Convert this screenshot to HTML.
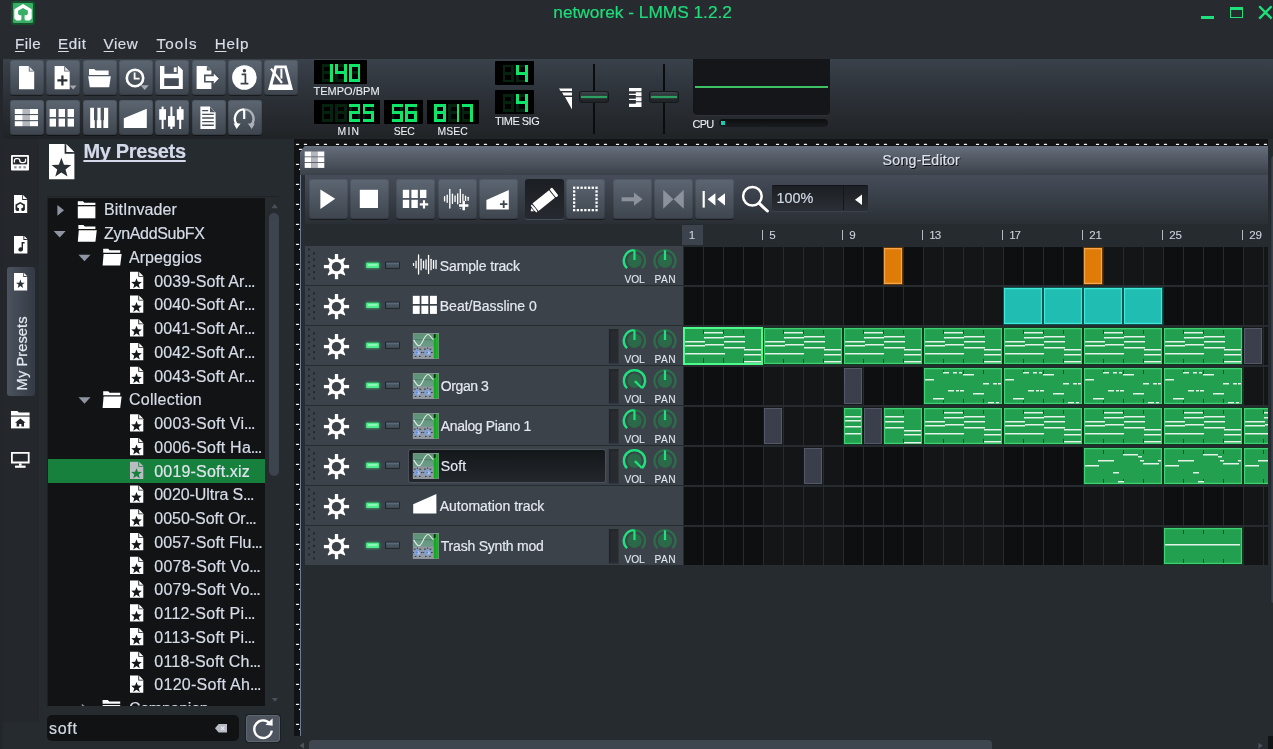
<!DOCTYPE html>
<html lang="en"><head><meta charset="utf-8"><title>networek - LMMS 1.2.2</title>
<style>
html,body{margin:0;padding:0}
body{width:1273px;height:749px;overflow:hidden;background:#262b30;position:relative;font-family:"Liberation Sans",sans-serif}
div{position:absolute;box-sizing:border-box}
.t{white-space:nowrap;line-height:1;-webkit-text-stroke:.2px currentColor}
u{text-decoration:underline;text-decoration-skip-ink:none;text-decoration-thickness:1.4px;text-underline-offset:1.6px}
.tb{border-radius:3px;background:linear-gradient(#5c6672,#3e454e);box-shadow:0 1px 0 rgba(0,0,0,.45),inset 0 0 0 1px rgba(0,0,0,.12)}
svg{overflow:visible}
</style></head>
<body>
<div id="root" style="left:0;top:0;width:1273px;height:749px;overflow:hidden;will-change:transform">
<div style="left:0.00px;top:0.00px;width:1273.00px;height:58.50px;background:#272b2f"></div>
<div style="left:11.00px;top:1.00px;width:24.20px;height:24.00px;background:#14502c;border-radius:3px;filter:blur(.6px)"></div>
<div style="left:12.80px;top:3.00px;width:20.50px;height:20.00px;background:#39ae66;border-radius:1px"></div>
<svg style="position:absolute;left:0.00px;top:0.00px;" width="46" height="26" viewBox="0 0 46 26"><path d="M23 4.1 L31.7 9.3 V18.6 L29.6 20.5 H25.6 L24.4 19.2 V15 H21.6 V19.2 L20.4 20.5 H16.4 L14.3 18.6 V9.3 Z" fill="#fff"/><path d="M23 7.9 L27.9 10.7 V14 L26.6 15.3 H19.4 L18.1 14 V10.7 Z" fill="#39ae66"/><rect x="21.7" y="14.6" width="2.6" height="7" fill="#39ae66"/></svg>
<div class="t" style="left:553.30px;top:4.00px;font-size:17.3px;color:#1fdc7b;;letter-spacing:0.0px">networek - LMMS 1.2.2</div>
<div style="left:1201.00px;top:16.00px;width:13.20px;height:3.00px;background:#1fe07c"></div>
<div style="left:1229.80px;top:6.80px;width:13.50px;height:11.40px;border:1.2px solid #1fe07c;border-top-width:3px"></div>
<svg style="position:absolute;left:1258.00px;top:5.10px;" width="15" height="15" viewBox="0 0 15 15"><path d="M1.2 1.2 L13.6 13.6 M13.6 1.2 L1.2 13.6" stroke="#1fe07c" stroke-width="2.3" fill="none"/></svg>
<div class="t" style="left:14.90px;top:36.00px;font-size:15.2px;color:#d8dde8;;letter-spacing:0.467px"><u>F</u>ile</div>
<div class="t" style="left:58.00px;top:36.00px;font-size:15.2px;color:#d8dde8;;letter-spacing:0.633px"><u>E</u>dit</div>
<div class="t" style="left:103.60px;top:36.00px;font-size:15.2px;color:#d8dde8;;letter-spacing:0.467px"><u>V</u>iew</div>
<div class="t" style="left:156.40px;top:36.00px;font-size:15.2px;color:#d8dde8;;letter-spacing:1.2px"><u>T</u>ools</div>
<div class="t" style="left:214.70px;top:36.00px;font-size:15.2px;color:#d8dde8;;letter-spacing:0.8px"><u>H</u>elp</div>
<div style="left:3.00px;top:58.50px;width:1270.00px;height:80.50px;background:linear-gradient(#39414a,#2b3036 50%,#202326)"></div>
<div style="left:0.00px;top:58.50px;width:3.00px;height:700.00px;background:#23272b"></div>
<div class="tb" style="left:10.00px;top:60.00px;width:34.00px;height:35.00px;"></div>
<div class="tb" style="left:46.40px;top:60.00px;width:34.00px;height:35.00px;"></div>
<div class="tb" style="left:82.70px;top:60.00px;width:34.00px;height:35.00px;"></div>
<div class="tb" style="left:119.00px;top:60.00px;width:34.00px;height:35.00px;"></div>
<div class="tb" style="left:155.20px;top:60.00px;width:34.00px;height:35.00px;"></div>
<div class="tb" style="left:191.50px;top:60.00px;width:34.00px;height:35.00px;"></div>
<div class="tb" style="left:227.80px;top:60.00px;width:34.00px;height:35.00px;"></div>
<div class="tb" style="left:264.00px;top:60.00px;width:34.00px;height:35.00px;"></div>
<div class="tb" style="left:10.00px;top:100.00px;width:34.00px;height:35.00px;"></div>
<div class="tb" style="left:46.40px;top:100.00px;width:34.00px;height:35.00px;"></div>
<div class="tb" style="left:82.70px;top:100.00px;width:34.00px;height:35.00px;"></div>
<div class="tb" style="left:119.00px;top:100.00px;width:34.00px;height:35.00px;"></div>
<div class="tb" style="left:155.20px;top:100.00px;width:34.00px;height:35.00px;"></div>
<div class="tb" style="left:191.50px;top:100.00px;width:34.00px;height:35.00px;"></div>
<div class="tb" style="left:227.80px;top:100.00px;width:34.00px;height:35.00px;"></div>
<svg style="position:absolute;left:10.00px;top:60.00px;" width="34" height="35" viewBox="0 0 34 35"><path d="M9 6 H18.5 L24.2 11.7 V29.2 H9 Z" fill="#fff"/><path d="M18.8 6.3 V11.4 H23.9 Z" fill="#4f5863"/><path d="M19.6 6.9 L23.4 10.7 H19.6 Z" fill="#fff" opacity=".85"/></svg>
<svg style="position:absolute;left:46.40px;top:60.00px;" width="34" height="35" viewBox="0 0 34 35"><path d="M8.6 6 H18 L23.7 11.7 V29.2 H8.6 Z" fill="#fff"/><path d="M18.3 6.3 V11.4 H23.4 Z" fill="#4f5863"/><path d="M19.1 6.9 L22.9 10.7 H19.1 Z" fill="#fff" opacity=".85"/><path d="M11.4 20.4 h10 M16.4 15.4 v10" stroke="#2b3036" stroke-width="2.2"/><path d="M23.6 25.4 h7 l-3.5 4.2z" fill="#a4a9b1"/></svg>
<svg style="position:absolute;left:82.70px;top:60.00px;" width="34" height="35" viewBox="0 0 34 35"><path d="M6 9 h5.2 l1.6 1.6 H25.6 V15 H6 Z" fill="#fff"/><path d="M5.2 16.3 H27.8 L26.2 27.2 H6.8 Z" fill="#fff"/></svg>
<svg style="position:absolute;left:119.00px;top:60.00px;" width="34" height="35" viewBox="0 0 34 35"><circle cx="16" cy="18" r="8.2" fill="none" stroke="#fff" stroke-width="2.6"/><path d="M15.6 12.6 V18.6 H20.6" stroke="#fff" stroke-width="1.8" fill="none"/><path d="M21.6 25.2 h8.2 l-4.1 4.8z" fill="#a4a9b1"/></svg>
<svg style="position:absolute;left:155.20px;top:60.00px;" width="34" height="35" viewBox="0 0 34 35"><path d="M5 6 H23.6 L27.8 10.2 V29 H5 Z" fill="#fff"/><rect x="9.4" y="6" width="13.4" height="7.8" fill="#4f5863"/><rect x="18.8" y="7.4" width="2.8" height="4.6" fill="#fff"/><rect x="9.2" y="18.2" width="14.6" height="7.8" fill="#454c56"/></svg>
<svg style="position:absolute;left:191.50px;top:60.00px;" width="34" height="35" viewBox="0 0 34 35"><path d="M4.6 6 H14.6 L19.4 10.8 V29 H4.6 Z" fill="#fff"/><path d="M14.8 6.4 V10.6 H19 Z" fill="#4f5863"/><path d="M12.8 15.4 H21 V11.6 L28 18.6 L21 25.6 V21.8 H12.8 Z" fill="#fff" stroke="#4a525c" stroke-width="1.6"/></svg>
<svg style="position:absolute;left:227.80px;top:60.00px;" width="34" height="35" viewBox="0 0 34 35"><circle cx="16.4" cy="17.5" r="12.3" fill="#fff"/><circle cx="16.4" cy="10.8" r="1.7" fill="#3a4048"/><path d="M13.6 14.4 H17.4 V23 M12.6 23.6 H20.4" stroke="#3a4048" stroke-width="1.7" fill="none"/></svg>
<svg style="position:absolute;left:264.00px;top:60.00px;" width="34" height="35" viewBox="0 0 34 35"><path d="M10.6 5.4 H22.6 L29 30 H4 Z M12.8 8.2 L8.6 24.4 H24.6 L20.4 8.2 Z" fill="#fff" fill-rule="evenodd"/><path d="M7 8.6 L18 23" stroke="#fff" stroke-width="2.2"/><rect x="16.4" y="8.6" width="2" height="10" fill="#fff"/></svg>
<svg style="position:absolute;left:10.00px;top:100.00px;" width="34" height="35" viewBox="0 0 34 35"><rect x="4.8" y="9.00" width="8.00" height="5.00" fill="#fff"/><rect x="12.80" y="9.00" width="7.20" height="5.00" fill="#b4b8be"/><rect x="20.00" y="9.00" width="8.00" height="5.00" fill="#fff"/><rect x="4.8" y="15.10" width="8.00" height="5.00" fill="#fff"/><rect x="12.80" y="15.10" width="7.20" height="5.00" fill="#b4b8be"/><rect x="20.00" y="15.10" width="8.00" height="5.00" fill="#fff"/><rect x="4.8" y="21.20" width="8.00" height="5.00" fill="#fff"/><rect x="12.80" y="21.20" width="7.20" height="5.00" fill="#b4b8be"/><rect x="20.00" y="21.20" width="8.00" height="5.00" fill="#fff"/></svg>
<svg style="position:absolute;left:46.40px;top:100.00px;" width="34" height="35" viewBox="0 0 34 35"><rect x="3.60" y="9.00" width="6.4" height="8" fill="#fff"/><rect x="12.60" y="9.00" width="6.4" height="8" fill="#fff"/><rect x="21.60" y="9.00" width="6.4" height="8" fill="#fff"/><rect x="3.60" y="18.60" width="6.4" height="8" fill="#fff"/><rect x="12.60" y="18.60" width="6.4" height="8" fill="#fff"/><rect x="21.60" y="18.60" width="6.4" height="8" fill="#fff"/></svg>
<svg style="position:absolute;left:82.70px;top:100.00px;" width="34" height="35" viewBox="0 0 34 35"><rect x="7.2" y="7.8" width="4.6" height="20.2" fill="#fff"/><rect x="13.8" y="7.8" width="4.6" height="20.2" fill="#fff"/><rect x="20.4" y="7.8" width="4.8" height="20.2" fill="#fff"/><rect x="11" y="7.8" width="3.4" height="12.4" fill="#4d555f"/><rect x="17.6" y="7.8" width="3.4" height="12.4" fill="#4d555f"/></svg>
<svg style="position:absolute;left:119.00px;top:100.00px;" width="34" height="35" viewBox="0 0 34 35"><path d="M4.8 18.2 L27.8 8.8 V28 H4.8 Z" fill="#fff"/></svg>
<svg style="position:absolute;left:155.20px;top:100.00px;" width="34" height="35" viewBox="0 0 34 35"><rect x="6.6" y="6.6" width="2" height="22.4" fill="#fff"/><rect x="4.199999999999999" y="9.2" width="6.8" height="10.6" fill="#fff"/><rect x="15.399999999999999" y="6.6" width="2" height="22.4" fill="#fff"/><rect x="12.999999999999998" y="16" width="6.8" height="10.6" fill="#fff"/><rect x="24.2" y="6.6" width="2" height="22.4" fill="#fff"/><rect x="21.8" y="9.2" width="6.8" height="10.6" fill="#fff"/></svg>
<svg style="position:absolute;left:191.50px;top:100.00px;" width="34" height="35" viewBox="0 0 34 35"><path d="M8.4 6.6 H17.8 L23.6 12.4 V29 H8.4 Z" fill="#fff"/><path d="M18 7 V12.2 H23.2 Z" fill="#4f5863"/><path d="M10.2 10.6 h6 M10.2 14.4 h11.6 M10.2 18 h11.6 M10.2 21.6 h11.6 M10.2 25.2 h11.6" stroke="#464d57" stroke-width="1.4"/></svg>
<svg style="position:absolute;left:227.80px;top:100.00px;" width="34" height="35" viewBox="0 0 34 35"><path d="M9.98 25.51 A9.3 9.3 0 0 1 16.20 9.30" fill="none" stroke="#fff" stroke-width="2.3"/><path d="M16.20 9.30 A9.3 9.3 0 0 1 22.42 25.51" fill="none" stroke="#aeb3ba" stroke-width="2.3"/><rect x="15.1" y="9.4" width="2.2" height="9.6" fill="#fff"/><path d="M5.6 23.6 L12.6 23.4 L8.6 29 Z" fill="#fff"/><path d="M26.8 23.6 L19.8 23.4 L23.8 29 Z" fill="#aeb3ba"/></svg>
<style>.dg i{position:absolute;display:block}.lt{position:absolute;display:block;font:bold 17px "Liberation Mono",monospace;line-height:17.6px;letter-spacing:3.5px;white-space:nowrap;overflow:hidden;color:transparent}</style>
<div style="left:314.00px;top:60.00px;width:52.70px;height:23.80px;background:#000;border-radius:1px"><div class="dg" style="left:7.70px;top:4.00px;width:11.3px;height:17.6px"><i style="left:0.00px;top:0.00px;width:11.30px;height:2.70px;background:#05230f"></i><i style="left:0.00px;top:14.90px;width:11.30px;height:2.70px;background:#05230f"></i><i style="left:0.00px;top:7.45px;width:2.70px;height:10.15px;background:#05230f"></i><i style="left:0.00px;top:0.00px;width:2.70px;height:10.15px;background:#05230f"></i><i style="left:0.00px;top:7.45px;width:11.30px;height:2.70px;background:#05230f"></i><i style="left:8.60px;top:0.00px;width:2.70px;height:10.15px;background:#0fe566"></i><i style="left:8.60px;top:7.45px;width:2.70px;height:10.15px;background:#0fe566"></i></div><div class="dg" style="left:21.40px;top:4.00px;width:11.3px;height:17.6px"><i style="left:0.00px;top:0.00px;width:11.30px;height:2.70px;background:#05230f"></i><i style="left:0.00px;top:14.90px;width:11.30px;height:2.70px;background:#05230f"></i><i style="left:0.00px;top:7.45px;width:2.70px;height:10.15px;background:#05230f"></i><i style="left:8.60px;top:0.00px;width:2.70px;height:10.15px;background:#0fe566"></i><i style="left:8.60px;top:7.45px;width:2.70px;height:10.15px;background:#0fe566"></i><i style="left:0.00px;top:0.00px;width:2.70px;height:10.15px;background:#0fe566"></i><i style="left:0.00px;top:7.45px;width:11.30px;height:2.70px;background:#0fe566"></i></div><div class="dg" style="left:35.10px;top:4.00px;width:11.3px;height:17.6px"><i style="left:0.00px;top:7.45px;width:11.30px;height:2.70px;background:#05230f"></i><i style="left:0.00px;top:0.00px;width:11.30px;height:2.70px;background:#0fe566"></i><i style="left:8.60px;top:0.00px;width:2.70px;height:10.15px;background:#0fe566"></i><i style="left:8.60px;top:7.45px;width:2.70px;height:10.15px;background:#0fe566"></i><i style="left:0.00px;top:14.90px;width:11.30px;height:2.70px;background:#0fe566"></i><i style="left:0.00px;top:7.45px;width:2.70px;height:10.15px;background:#0fe566"></i><i style="left:0.00px;top:0.00px;width:2.70px;height:10.15px;background:#0fe566"></i></div><b class="lt" style="left:7.70px;top:4px;width:41.10px;height:17.6px">140</b></div>
<div style="left:314.00px;top:100.00px;width:66.00px;height:23.80px;background:#000;border-radius:1px"><div class="dg" style="left:7.70px;top:4.00px;width:11.3px;height:17.6px"><i style="left:0.00px;top:0.00px;width:11.30px;height:2.70px;background:#05230f"></i><i style="left:8.60px;top:0.00px;width:2.70px;height:10.15px;background:#05230f"></i><i style="left:8.60px;top:7.45px;width:2.70px;height:10.15px;background:#05230f"></i><i style="left:0.00px;top:14.90px;width:11.30px;height:2.70px;background:#05230f"></i><i style="left:0.00px;top:7.45px;width:2.70px;height:10.15px;background:#05230f"></i><i style="left:0.00px;top:0.00px;width:2.70px;height:10.15px;background:#05230f"></i><i style="left:0.00px;top:7.45px;width:11.30px;height:2.70px;background:#05230f"></i></div><div class="dg" style="left:21.40px;top:4.00px;width:11.3px;height:17.6px"><i style="left:0.00px;top:0.00px;width:11.30px;height:2.70px;background:#05230f"></i><i style="left:8.60px;top:0.00px;width:2.70px;height:10.15px;background:#05230f"></i><i style="left:8.60px;top:7.45px;width:2.70px;height:10.15px;background:#05230f"></i><i style="left:0.00px;top:14.90px;width:11.30px;height:2.70px;background:#05230f"></i><i style="left:0.00px;top:7.45px;width:2.70px;height:10.15px;background:#05230f"></i><i style="left:0.00px;top:0.00px;width:2.70px;height:10.15px;background:#05230f"></i><i style="left:0.00px;top:7.45px;width:11.30px;height:2.70px;background:#05230f"></i></div><div class="dg" style="left:35.10px;top:4.00px;width:11.3px;height:17.6px"><i style="left:8.60px;top:7.45px;width:2.70px;height:10.15px;background:#05230f"></i><i style="left:0.00px;top:0.00px;width:2.70px;height:10.15px;background:#05230f"></i><i style="left:0.00px;top:0.00px;width:11.30px;height:2.70px;background:#0fe566"></i><i style="left:8.60px;top:0.00px;width:2.70px;height:10.15px;background:#0fe566"></i><i style="left:0.00px;top:14.90px;width:11.30px;height:2.70px;background:#0fe566"></i><i style="left:0.00px;top:7.45px;width:2.70px;height:10.15px;background:#0fe566"></i><i style="left:0.00px;top:7.45px;width:11.30px;height:2.70px;background:#0fe566"></i></div><div class="dg" style="left:48.80px;top:4.00px;width:11.3px;height:17.6px"><i style="left:8.60px;top:0.00px;width:2.70px;height:10.15px;background:#05230f"></i><i style="left:0.00px;top:7.45px;width:2.70px;height:10.15px;background:#05230f"></i><i style="left:0.00px;top:0.00px;width:11.30px;height:2.70px;background:#0fe566"></i><i style="left:8.60px;top:7.45px;width:2.70px;height:10.15px;background:#0fe566"></i><i style="left:0.00px;top:14.90px;width:11.30px;height:2.70px;background:#0fe566"></i><i style="left:0.00px;top:0.00px;width:2.70px;height:10.15px;background:#0fe566"></i><i style="left:0.00px;top:7.45px;width:11.30px;height:2.70px;background:#0fe566"></i></div><b class="lt" style="left:35.10px;top:4px;width:27.40px;height:17.6px">25</b></div>
<div style="left:384.00px;top:100.00px;width:39.00px;height:23.80px;background:#000;border-radius:1px"><div class="dg" style="left:7.70px;top:4.00px;width:11.3px;height:17.6px"><i style="left:8.60px;top:0.00px;width:2.70px;height:10.15px;background:#05230f"></i><i style="left:0.00px;top:7.45px;width:2.70px;height:10.15px;background:#05230f"></i><i style="left:0.00px;top:0.00px;width:11.30px;height:2.70px;background:#0fe566"></i><i style="left:8.60px;top:7.45px;width:2.70px;height:10.15px;background:#0fe566"></i><i style="left:0.00px;top:14.90px;width:11.30px;height:2.70px;background:#0fe566"></i><i style="left:0.00px;top:0.00px;width:2.70px;height:10.15px;background:#0fe566"></i><i style="left:0.00px;top:7.45px;width:11.30px;height:2.70px;background:#0fe566"></i></div><div class="dg" style="left:21.40px;top:4.00px;width:11.3px;height:17.6px"><i style="left:8.60px;top:0.00px;width:2.70px;height:10.15px;background:#05230f"></i><i style="left:0.00px;top:0.00px;width:11.30px;height:2.70px;background:#0fe566"></i><i style="left:8.60px;top:7.45px;width:2.70px;height:10.15px;background:#0fe566"></i><i style="left:0.00px;top:14.90px;width:11.30px;height:2.70px;background:#0fe566"></i><i style="left:0.00px;top:7.45px;width:2.70px;height:10.15px;background:#0fe566"></i><i style="left:0.00px;top:0.00px;width:2.70px;height:10.15px;background:#0fe566"></i><i style="left:0.00px;top:7.45px;width:11.30px;height:2.70px;background:#0fe566"></i></div><b class="lt" style="left:7.70px;top:4px;width:27.40px;height:17.6px">56</b></div>
<div style="left:426.60px;top:100.00px;width:52.60px;height:23.80px;background:#000;border-radius:1px"><div class="dg" style="left:7.70px;top:4.00px;width:11.3px;height:17.6px"><i style="left:0.00px;top:0.00px;width:11.30px;height:2.70px;background:#0fe566"></i><i style="left:8.60px;top:0.00px;width:2.70px;height:10.15px;background:#0fe566"></i><i style="left:8.60px;top:7.45px;width:2.70px;height:10.15px;background:#0fe566"></i><i style="left:0.00px;top:14.90px;width:11.30px;height:2.70px;background:#0fe566"></i><i style="left:0.00px;top:7.45px;width:2.70px;height:10.15px;background:#0fe566"></i><i style="left:0.00px;top:0.00px;width:2.70px;height:10.15px;background:#0fe566"></i><i style="left:0.00px;top:7.45px;width:11.30px;height:2.70px;background:#0fe566"></i></div><div class="dg" style="left:21.40px;top:4.00px;width:11.3px;height:17.6px"><i style="left:0.00px;top:0.00px;width:11.30px;height:2.70px;background:#05230f"></i><i style="left:0.00px;top:14.90px;width:11.30px;height:2.70px;background:#05230f"></i><i style="left:0.00px;top:7.45px;width:2.70px;height:10.15px;background:#05230f"></i><i style="left:0.00px;top:0.00px;width:2.70px;height:10.15px;background:#05230f"></i><i style="left:0.00px;top:7.45px;width:11.30px;height:2.70px;background:#05230f"></i><i style="left:8.60px;top:0.00px;width:2.70px;height:10.15px;background:#0fe566"></i><i style="left:8.60px;top:7.45px;width:2.70px;height:10.15px;background:#0fe566"></i></div><div class="dg" style="left:35.10px;top:4.00px;width:11.3px;height:17.6px"><i style="left:0.00px;top:14.90px;width:11.30px;height:2.70px;background:#05230f"></i><i style="left:0.00px;top:7.45px;width:2.70px;height:10.15px;background:#05230f"></i><i style="left:0.00px;top:0.00px;width:2.70px;height:10.15px;background:#05230f"></i><i style="left:0.00px;top:7.45px;width:11.30px;height:2.70px;background:#05230f"></i><i style="left:0.00px;top:0.00px;width:11.30px;height:2.70px;background:#0fe566"></i><i style="left:8.60px;top:0.00px;width:2.70px;height:10.15px;background:#0fe566"></i><i style="left:8.60px;top:7.45px;width:2.70px;height:10.15px;background:#0fe566"></i></div><b class="lt" style="left:7.70px;top:4px;width:41.10px;height:17.6px">817</b></div>
<div style="left:494.90px;top:60.80px;width:39.20px;height:24.20px;background:#000;border-radius:1px"><div class="dg" style="left:7.70px;top:4.00px;width:11.3px;height:17.6px"><i style="left:0.00px;top:0.00px;width:11.30px;height:2.70px;background:#05230f"></i><i style="left:8.60px;top:0.00px;width:2.70px;height:10.15px;background:#05230f"></i><i style="left:8.60px;top:7.45px;width:2.70px;height:10.15px;background:#05230f"></i><i style="left:0.00px;top:14.90px;width:11.30px;height:2.70px;background:#05230f"></i><i style="left:0.00px;top:7.45px;width:2.70px;height:10.15px;background:#05230f"></i><i style="left:0.00px;top:0.00px;width:2.70px;height:10.15px;background:#05230f"></i><i style="left:0.00px;top:7.45px;width:11.30px;height:2.70px;background:#05230f"></i></div><div class="dg" style="left:21.40px;top:4.00px;width:11.3px;height:17.6px"><i style="left:0.00px;top:0.00px;width:11.30px;height:2.70px;background:#05230f"></i><i style="left:0.00px;top:14.90px;width:11.30px;height:2.70px;background:#05230f"></i><i style="left:0.00px;top:7.45px;width:2.70px;height:10.15px;background:#05230f"></i><i style="left:8.60px;top:0.00px;width:2.70px;height:10.15px;background:#0fe566"></i><i style="left:8.60px;top:7.45px;width:2.70px;height:10.15px;background:#0fe566"></i><i style="left:0.00px;top:0.00px;width:2.70px;height:10.15px;background:#0fe566"></i><i style="left:0.00px;top:7.45px;width:11.30px;height:2.70px;background:#0fe566"></i></div><b class="lt" style="left:21.40px;top:4px;width:13.70px;height:17.6px">4</b></div>
<div style="left:494.90px;top:90.00px;width:39.20px;height:24.20px;background:#000;border-radius:1px"><div class="dg" style="left:7.70px;top:4.00px;width:11.3px;height:17.6px"><i style="left:0.00px;top:0.00px;width:11.30px;height:2.70px;background:#05230f"></i><i style="left:8.60px;top:0.00px;width:2.70px;height:10.15px;background:#05230f"></i><i style="left:8.60px;top:7.45px;width:2.70px;height:10.15px;background:#05230f"></i><i style="left:0.00px;top:14.90px;width:11.30px;height:2.70px;background:#05230f"></i><i style="left:0.00px;top:7.45px;width:2.70px;height:10.15px;background:#05230f"></i><i style="left:0.00px;top:0.00px;width:2.70px;height:10.15px;background:#05230f"></i><i style="left:0.00px;top:7.45px;width:11.30px;height:2.70px;background:#05230f"></i></div><div class="dg" style="left:21.40px;top:4.00px;width:11.3px;height:17.6px"><i style="left:0.00px;top:0.00px;width:11.30px;height:2.70px;background:#05230f"></i><i style="left:0.00px;top:14.90px;width:11.30px;height:2.70px;background:#05230f"></i><i style="left:0.00px;top:7.45px;width:2.70px;height:10.15px;background:#05230f"></i><i style="left:8.60px;top:0.00px;width:2.70px;height:10.15px;background:#0fe566"></i><i style="left:8.60px;top:7.45px;width:2.70px;height:10.15px;background:#0fe566"></i><i style="left:0.00px;top:0.00px;width:2.70px;height:10.15px;background:#0fe566"></i><i style="left:0.00px;top:7.45px;width:11.30px;height:2.70px;background:#0fe566"></i></div><b class="lt" style="left:21.40px;top:4px;width:13.70px;height:17.6px">4</b></div>
<div class="t" style="left:313.40px;top:86.00px;font-size:11px;color:#eceff4;;letter-spacing:0.025px;-webkit-text-stroke-width:.08px">TEMPO/BPM</div>
<div class="t" style="left:337.60px;top:127.00px;font-size:10.4px;color:#eceff4;;letter-spacing:1.15px;-webkit-text-stroke-width:.08px">MIN</div>
<div class="t" style="left:393.80px;top:127.00px;font-size:10.4px;color:#eceff4;;letter-spacing:-0.15px;-webkit-text-stroke-width:.08px">SEC</div>
<div class="t" style="left:437.60px;top:127.00px;font-size:10.4px;color:#eceff4;;letter-spacing:0.033px;-webkit-text-stroke-width:.08px">MSEC</div>
<div class="t" style="left:495.00px;top:116.00px;font-size:11px;color:#eceff4;;letter-spacing:-0.514px;-webkit-text-stroke-width:.08px">TIME SIG</div>
<div style="left:593.10px;top:64.00px;width:1.80px;height:70.00px;background:#0b0c0d"></div><div style="left:579.00px;top:91.00px;width:30.00px;height:12.00px;border-radius:3.5px;background:#16181b"></div><div style="left:580.00px;top:92.00px;width:28.00px;height:10.00px;border-radius:2.5px;background:linear-gradient(#40474f,#272b30 45%,#1f2226)"></div><div style="left:580.60px;top:96.30px;width:26.80px;height:1.40px;background:#2f9e61;box-shadow:0 0 1.5px #2a8f58"></div>
<div style="left:663.10px;top:64.00px;width:1.80px;height:70.00px;background:#0b0c0d"></div><div style="left:649.00px;top:91.00px;width:30.00px;height:12.00px;border-radius:3.5px;background:#16181b"></div><div style="left:650.00px;top:92.00px;width:28.00px;height:10.00px;border-radius:2.5px;background:linear-gradient(#40474f,#272b30 45%,#1f2226)"></div><div style="left:650.60px;top:96.30px;width:26.80px;height:1.40px;background:#2f9e61;box-shadow:0 0 1.5px #2a8f58"></div>
<svg style="position:absolute;left:559.00px;top:88.00px;" width="14" height="22" viewBox="0 0 14 22"><path d="M0 0.4 H13 V3 H1.6 Z M3 4.6 H13 V7.4 H4.8 Z M6 9 H13 V21.4 Z" fill="#fff"/></svg>
<svg style="position:absolute;left:629.00px;top:87.90px;" width="13" height="19.2" viewBox="0 0 13 19.2"><path d="M0 0 H12.5 V3.3 H0 Z M6.8 4.3 H12.5 V8.3 H6.8 Z M6.8 9.3 H12.5 V13.3 H6.8 Z M0 15.8 H6.8 V14.3 H12.5 V19 H0 Z M0 5.7 H6.8 V6.9 H0 Z M0 10.7 H6.8 V11.9 H0 Z" fill="#fff"/></svg>
<div style="left:693.00px;top:59.00px;width:137.00px;height:56.00px;background:#14161a;border-radius:0 0 4px 4px;box-shadow:0 1px 0 rgba(255,255,255,.04)"></div>
<div style="left:694.70px;top:86.00px;width:133.60px;height:2.00px;background:#3fc266"></div>
<div class="t" style="left:692.60px;top:119.00px;font-size:11px;color:#eceff4;;letter-spacing:-0.85px;-webkit-text-stroke-width:.08px">CPU</div>
<div style="left:718.70px;top:119.00px;width:109.50px;height:8.00px;background:linear-gradient(#0c0d0f,#1a1d20);border-radius:4px"></div>
<div style="left:721.40px;top:121.30px;width:3.70px;height:3.70px;background:#19c9b0"></div>
<div style="left:3.00px;top:139.00px;width:35.80px;height:582.60px;background:#24282c"></div>
<div style="left:39.00px;top:139.00px;width:255.00px;height:610.00px;background:#262b30"></div>
<div style="left:6.60px;top:266.70px;width:28.60px;height:129.30px;border-radius:3px;background:linear-gradient(90deg,#4b535f,#343a43)"></div>
<svg style="position:absolute;left:11.00px;top:154.80px;" width="18" height="15.4" viewBox="0 0 18 15.4"><rect x="0" y="0" width="18" height="15.4" rx="1" fill="#fff"/><rect x="1.8" y="1.8" width="14.4" height="7.6" fill="#23272b"/><path d="M3.4 7.4 V5.6 Q3.4 3.6 5.4 3.6 H6.8 Q8.8 3.6 8.8 5.6 Q8.8 7.6 10.8 7.6 H12.4 Q14.6 7.6 14.6 5.6 V3.8" fill="none" stroke="#fff" stroke-width="1.3"/><rect x="3.2" y="11.2" width="2.4" height="2.2" fill="#8d9299"/><rect x="7.8" y="11.2" width="2.4" height="2.2" fill="#8d9299"/><rect x="12.4" y="11.2" width="2.4" height="2.2" fill="#8d9299"/></svg>
<svg style="position:absolute;left:13.80px;top:194.90px;" width="13.2" height="18.1" viewBox="0 0 13.2 18.1"><path d="M0 0 H8.2 L13.2 5 V18.1 H0 Z" fill="#fff"/><path d="M8.20 0 V5.00 H13.2 Z" fill="#23272b"/><path d="M9.10 0.10 L13.10 4.10 H9.10 Z" fill="#fff"/><path d="M6.2 6.9 L10.9 9.5 V14.8 L9.7 15.9 H7.9 L7.3 15.2 V13 H5.1 V15.2 L4.5 15.9 H2.7 L1.5 14.8 V9.5 Z" fill="#23272b"/><path d="M6.2 8.8 L9.2 10.5 V12.3 L8.4 13 H4 L3.2 12.3 V10.5 Z" fill="#fff"/><rect x="5.3" y="12.6" width="1.8" height="3.6" fill="#fff"/></svg>
<svg style="position:absolute;left:13.80px;top:236.30px;" width="13.4" height="17.4" viewBox="0 0 13.4 17.4"><path d="M0 0 H9.4 L13.4 4 V17.4 H0 Z" fill="#fff"/><path d="M9.40 0 V4.00 H13.4 Z" fill="#23272b"/><path d="M10.30 0.10 L13.30 3.10 H10.30 Z" fill="#fff"/><path d="M7.6 6 H10.6 V7.6 H9 V13.4 A2.3 2.1 0 1 1 7.6 11.5 Z" fill="#23272b"/></svg>
<svg style="position:absolute;left:14.00px;top:272.70px;" width="13.2" height="17.4" viewBox="0 0 13.2 17.4"><path d="M0 0 H9.2 L13.2 4 V17.4 H0 Z" fill="#fff"/><path d="M9.20 0 V4.00 H13.2 Z" fill="#424a54"/><path d="M10.10 0.10 L13.10 3.10 H10.10 Z" fill="#fff"/><path d="M6.40,6.60 L7.54,9.64 L10.77,9.78 L8.24,11.80 L9.10,14.92 L6.40,13.13 L3.70,14.92 L4.56,11.80 L2.03,9.78 L5.26,9.64 Z" fill="#2b3037"/></svg>
<div class="t" style="left:21.5px;top:353px;width:0;height:0;"><div class="t" style="left:-60px;top:-7.4px;width:120px;text-align:center;font-size:14.8px;color:#e6e9f0;transform:rotate(-90deg);transform-origin:50% 50%">My Presets</div></div>
<svg style="position:absolute;left:11.00px;top:410.80px;" width="18.6" height="17.4" viewBox="0 0 18.6 17.4"><path d="M0 0 H6.4 L7.8 1.6 H18.6 V4.4 H0 Z" fill="#fff"/><path d="M0 5.6 H18.6 V17.4 H0 Z" fill="#fff"/><path d="M9.3 7.4 L14.6 11.8 H13 V15.6 H10.4 V13 H8.2 V15.6 H5.6 V11.8 H4 Z" fill="#23272b"/></svg>
<svg style="position:absolute;left:11.00px;top:452.40px;" width="18.6" height="15.8" viewBox="0 0 18.6 15.8"><path d="M0 0 H18.6 V11.4 H0 Z M1.8 1.8 V9.6 H16.8 V1.8 Z" fill="#fff" fill-rule="evenodd"/><rect x="8" y="11.4" width="2.6" height="2.4" fill="#fff"/><rect x="4" y="13.6" width="10.6" height="2.2" fill="#fff"/></svg>
<svg style="position:absolute;left:49.00px;top:144.00px;" width="25.4" height="35.2" viewBox="0 0 25.4 35.2"><path d="M0 0 H15.599999999999998 L25.4 9.8 V35.2 H0 Z" fill="#fff"/><path d="M15.60 0 V9.80 H25.4 Z" fill="#262b30"/><path d="M17.30 0.10 L25.30 8.10 H17.30 Z" fill="#fff"/><path d="M12.40,13.80 L14.97,20.67 L22.29,20.99 L16.55,25.55 L18.51,32.61 L12.40,28.57 L6.29,32.61 L8.25,25.55 L2.51,20.99 L9.83,20.67 Z" fill="#2b3037"/></svg>
<div class="t" style="left:83.40px;top:141.00px;font-size:20px;color:#d5daea;font-weight:bold;text-decoration:underline;text-decoration-thickness:1.6px;text-underline-offset:2.2px;text-decoration-skip-ink:none;letter-spacing:-0.333px">My Presets</div>
<div style="left:47.00px;top:196.00px;width:231.50px;height:1.40px;background:#1f2226"></div>
<div style="left:46.60px;top:197.50px;width:1.60px;height:509.00px;background:#1d2024"></div>
<div style="left:48.00px;top:197.70px;width:217.20px;height:508.70px;background:#111314;overflow:hidden"><div class="t" style="left:56.10px;top:4.00px;font-size:16px;color:#d6dce8;;letter-spacing:0.078px">BitInvader</div><div class="t" style="left:56.10px;top:28.00px;font-size:16px;color:#d6dce8;;letter-spacing:-0.33px">ZynAddSubFX</div><div class="t" style="left:80.90px;top:52.00px;font-size:16px;color:#d6dce8;;letter-spacing:0.1px">Arpeggios</div><div class="t" style="left:106.30px;top:76.00px;font-size:16px;color:#d6dce8;;letter-spacing:0.092px">0039-Soft Ar<span style="font-size:11px;font-weight:bold;letter-spacing:0">…</span></div><div class="t" style="left:106.30px;top:99.00px;font-size:16px;color:#d6dce8;;letter-spacing:0.092px">0040-Soft Ar<span style="font-size:11px;font-weight:bold;letter-spacing:0">…</span></div><div class="t" style="left:106.30px;top:123.00px;font-size:16px;color:#d6dce8;;letter-spacing:0.092px">0041-Soft Ar<span style="font-size:11px;font-weight:bold;letter-spacing:0">…</span></div><div class="t" style="left:106.30px;top:147.00px;font-size:16px;color:#d6dce8;;letter-spacing:0.092px">0042-Soft Ar<span style="font-size:11px;font-weight:bold;letter-spacing:0">…</span></div><div class="t" style="left:106.30px;top:171.00px;font-size:16px;color:#d6dce8;;letter-spacing:0.092px">0043-Soft Ar<span style="font-size:11px;font-weight:bold;letter-spacing:0">…</span></div><div class="t" style="left:80.90px;top:194.00px;font-size:16px;color:#d6dce8;;letter-spacing:0.289px">Collection</div><div class="t" style="left:106.30px;top:218.00px;font-size:16px;color:#d6dce8;;letter-spacing:0.175px">0003-Soft Vi<span style="font-size:11px;font-weight:bold;letter-spacing:0">…</span></div><div class="t" style="left:106.30px;top:242.00px;font-size:16px;color:#d6dce8;;letter-spacing:0.2px">0006-Soft Ha<span style="font-size:11px;font-weight:bold;letter-spacing:0">…</span></div><div style="left:0.00px;top:260.95px;width:217.20px;height:24.00px;background:#17803c"></div><div class="t" style="left:106.30px;top:266.00px;font-size:16px;color:#dfe5ee;;letter-spacing:0.175px">0019-Soft.xiz</div><div class="t" style="left:106.30px;top:289.00px;font-size:16px;color:#d6dce8;;letter-spacing:-0.075px">0020-Ultra S<span style="font-size:11px;font-weight:bold;letter-spacing:0">…</span></div><div class="t" style="left:106.30px;top:313.00px;font-size:16px;color:#d6dce8;;letter-spacing:-0.025px">0050-Soft Or<span style="font-size:11px;font-weight:bold;letter-spacing:0">…</span></div><div class="t" style="left:106.30px;top:337.00px;font-size:16px;color:#d6dce8;;letter-spacing:0.092px">0057-Soft Flu<span style="font-size:11px;font-weight:bold;letter-spacing:0">…</span></div><div class="t" style="left:106.30px;top:361.00px;font-size:16px;color:#d6dce8;;letter-spacing:0.225px">0078-Soft Vo<span style="font-size:11px;font-weight:bold;letter-spacing:0">…</span></div><div class="t" style="left:106.30px;top:384.00px;font-size:16px;color:#d6dce8;;letter-spacing:0.225px">0079-Soft Vo<span style="font-size:11px;font-weight:bold;letter-spacing:0">…</span></div><div class="t" style="left:106.30px;top:408.00px;font-size:16px;color:#d6dce8;;letter-spacing:0.258px">0112-Soft Pi<span style="font-size:11px;font-weight:bold;letter-spacing:0">…</span></div><div class="t" style="left:106.30px;top:432.00px;font-size:16px;color:#d6dce8;;letter-spacing:0.258px">0113-Soft Pi<span style="font-size:11px;font-weight:bold;letter-spacing:0">…</span></div><div class="t" style="left:106.30px;top:456.00px;font-size:16px;color:#d6dce8;;letter-spacing:0.192px">0118-Soft Ch<span style="font-size:11px;font-weight:bold;letter-spacing:0">…</span></div><div class="t" style="left:106.30px;top:479.00px;font-size:16px;color:#d6dce8;;letter-spacing:0.275px">0120-Soft Ah<span style="font-size:11px;font-weight:bold;letter-spacing:0">…</span></div><div class="t" style="left:80.90px;top:503.00px;font-size:16px;color:#d6dce8;;letter-spacing:-0.25px">Companion</div><svg style="position:absolute;left:0.00px;top:0.00px;overflow:hidden" width="217.2" height="508.7" viewBox="0 0 217.2 508.7"><path d="M9.4 6.900000000000011 L16.0 12.300000000000011 L9.4 17.70000000000001 Z" fill="#8f94a3"/><path d="M29.8 3.3000000000000114 H35.0 L36.4 4.700000000000012 H47.400000000000006 V6.900000000000011 H29.8 Z" fill="#fff"/><path d="M29.8 8.300000000000011 H47.400000000000006 V20.30000000000001 H29.8 Z" fill="#fff"/><path d="M5.7 33.05000000000001 H17.7 L11.7 39.45000000000002 Z" fill="#8f94a3"/><path d="M30.400000000000002 27.05000000000001 H35.4 L36.8 28.45000000000001 H47.400000000000006 V31.05000000000001 H30.400000000000002 Z" fill="#fff"/><path d="M30.8 32.250000000000014 H48.8 L47.400000000000006 43.65000000000001 H29.8 Z" fill="#fff"/><path d="M30.5 56.80000000000001 H42.5 L36.5 63.20000000000002 Z" fill="#8f94a3"/><path d="M55.2 50.80000000000001 H60.2 L61.6 52.20000000000001 H72.2 V54.80000000000001 H55.2 Z" fill="#fff"/><path d="M55.6 56.000000000000014 H73.6 L72.2 67.4 H54.6 Z" fill="#fff"/><path d="M82 73.85000000000001 H90.3 L95.3 78.85000000000001 V91.05000000000001 H82 Z" fill="#fff"/><path d="M90.30 73.85000000000001 V78.85 H95.3 Z" fill="#111314"/><path d="M91.20 73.95 L95.20 77.95 H91.20 Z" fill="#fff"/><path d="M88.50,80.15 L89.88,83.85 L93.83,84.02 L90.74,86.48 L91.79,90.28 L88.50,88.10 L85.21,90.28 L86.26,86.48 L83.17,84.02 L87.12,83.85 Z" fill="#15181b"/><path d="M82 97.60000000000001 H90.3 L95.3 102.60000000000001 V114.80000000000001 H82 Z" fill="#fff"/><path d="M90.30 97.60000000000001 V102.60 H95.3 Z" fill="#111314"/><path d="M91.20 97.70 L95.20 101.70 H91.20 Z" fill="#fff"/><path d="M88.50,103.90 L89.88,107.60 L93.83,107.77 L90.74,110.23 L91.79,114.03 L88.50,111.85 L85.21,114.03 L86.26,110.23 L83.17,107.77 L87.12,107.60 Z" fill="#15181b"/><path d="M82 121.35000000000001 H90.3 L95.3 126.35000000000001 V138.55 H82 Z" fill="#fff"/><path d="M90.30 121.35000000000001 V126.35 H95.3 Z" fill="#111314"/><path d="M91.20 121.45 L95.20 125.45 H91.20 Z" fill="#fff"/><path d="M88.50,127.65 L89.88,131.35 L93.83,131.52 L90.74,133.98 L91.79,137.78 L88.50,135.60 L85.21,137.78 L86.26,133.98 L83.17,131.52 L87.12,131.35 Z" fill="#15181b"/><path d="M82 145.10000000000002 H90.3 L95.3 150.10000000000002 V162.3 H82 Z" fill="#fff"/><path d="M90.30 145.10000000000002 V150.10 H95.3 Z" fill="#111314"/><path d="M91.20 145.20 L95.20 149.20 H91.20 Z" fill="#fff"/><path d="M88.50,151.40 L89.88,155.10 L93.83,155.27 L90.74,157.73 L91.79,161.53 L88.50,159.35 L85.21,161.53 L86.26,157.73 L83.17,155.27 L87.12,155.10 Z" fill="#15181b"/><path d="M82 168.85000000000002 H90.3 L95.3 173.85000000000002 V186.05 H82 Z" fill="#fff"/><path d="M90.30 168.85000000000002 V173.85 H95.3 Z" fill="#111314"/><path d="M91.20 168.95 L95.20 172.95 H91.20 Z" fill="#fff"/><path d="M88.50,175.15 L89.88,178.85 L93.83,179.02 L90.74,181.48 L91.79,185.28 L88.50,183.10 L85.21,185.28 L86.26,181.48 L83.17,179.02 L87.12,178.85 Z" fill="#15181b"/><path d="M30.5 199.3 H42.5 L36.5 205.7 Z" fill="#8f94a3"/><path d="M55.2 193.3 H60.2 L61.6 194.70000000000002 H72.2 V197.3 H55.2 Z" fill="#fff"/><path d="M55.6 198.5 H73.6 L72.2 209.9 H54.6 Z" fill="#fff"/><path d="M82 216.35000000000002 H90.3 L95.3 221.35000000000002 V233.55 H82 Z" fill="#fff"/><path d="M90.30 216.35000000000002 V221.35 H95.3 Z" fill="#111314"/><path d="M91.20 216.45 L95.20 220.45 H91.20 Z" fill="#fff"/><path d="M88.50,222.65 L89.88,226.35 L93.83,226.52 L90.74,228.98 L91.79,232.78 L88.50,230.60 L85.21,232.78 L86.26,228.98 L83.17,226.52 L87.12,226.35 Z" fill="#15181b"/><path d="M82 240.10000000000002 H90.3 L95.3 245.10000000000002 V257.3 H82 Z" fill="#fff"/><path d="M90.30 240.10000000000002 V245.10 H95.3 Z" fill="#111314"/><path d="M91.20 240.20 L95.20 244.20 H91.20 Z" fill="#fff"/><path d="M88.50,246.40 L89.88,250.10 L93.83,250.27 L90.74,252.73 L91.79,256.53 L88.50,254.35 L85.21,256.53 L86.26,252.73 L83.17,250.27 L87.12,250.10 Z" fill="#15181b"/><path d="M82 263.85 H90.3 L95.3 268.85 V281.05 H82 Z" fill="#b9bcc0"/><path d="M90.30 263.85 V268.85 H95.3 Z" fill="#17803c"/><path d="M91.20 263.95 L95.20 267.95 H91.20 Z" fill="#b9bcc0"/><path d="M88.50,270.15 L89.88,273.85 L93.83,274.02 L90.74,276.48 L91.79,280.28 L88.50,278.10 L85.21,280.28 L86.26,276.48 L83.17,274.02 L87.12,273.85 Z" fill="#17803c"/><path d="M82 287.6 H90.3 L95.3 292.6 V304.8 H82 Z" fill="#fff"/><path d="M90.30 287.6 V292.60 H95.3 Z" fill="#111314"/><path d="M91.20 287.70 L95.20 291.70 H91.20 Z" fill="#fff"/><path d="M88.50,293.90 L89.88,297.60 L93.83,297.77 L90.74,300.23 L91.79,304.03 L88.50,301.85 L85.21,304.03 L86.26,300.23 L83.17,297.77 L87.12,297.60 Z" fill="#15181b"/><path d="M82 311.35 H90.3 L95.3 316.35 V328.55 H82 Z" fill="#fff"/><path d="M90.30 311.35 V316.35 H95.3 Z" fill="#111314"/><path d="M91.20 311.45 L95.20 315.45 H91.20 Z" fill="#fff"/><path d="M88.50,317.65 L89.88,321.35 L93.83,321.52 L90.74,323.98 L91.79,327.78 L88.50,325.60 L85.21,327.78 L86.26,323.98 L83.17,321.52 L87.12,321.35 Z" fill="#15181b"/><path d="M82 335.1 H90.3 L95.3 340.1 V352.3 H82 Z" fill="#fff"/><path d="M90.30 335.1 V340.10 H95.3 Z" fill="#111314"/><path d="M91.20 335.20 L95.20 339.20 H91.20 Z" fill="#fff"/><path d="M88.50,341.40 L89.88,345.10 L93.83,345.27 L90.74,347.73 L91.79,351.53 L88.50,349.35 L85.21,351.53 L86.26,347.73 L83.17,345.27 L87.12,345.10 Z" fill="#15181b"/><path d="M82 358.85 H90.3 L95.3 363.85 V376.05 H82 Z" fill="#fff"/><path d="M90.30 358.85 V363.85 H95.3 Z" fill="#111314"/><path d="M91.20 358.95 L95.20 362.95 H91.20 Z" fill="#fff"/><path d="M88.50,365.15 L89.88,368.85 L93.83,369.02 L90.74,371.48 L91.79,375.28 L88.50,373.10 L85.21,375.28 L86.26,371.48 L83.17,369.02 L87.12,368.85 Z" fill="#15181b"/><path d="M82 382.6 H90.3 L95.3 387.6 V399.8 H82 Z" fill="#fff"/><path d="M90.30 382.6 V387.60 H95.3 Z" fill="#111314"/><path d="M91.20 382.70 L95.20 386.70 H91.20 Z" fill="#fff"/><path d="M88.50,388.90 L89.88,392.60 L93.83,392.77 L90.74,395.23 L91.79,399.03 L88.50,396.85 L85.21,399.03 L86.26,395.23 L83.17,392.77 L87.12,392.60 Z" fill="#15181b"/><path d="M82 406.35 H90.3 L95.3 411.35 V423.55 H82 Z" fill="#fff"/><path d="M90.30 406.35 V411.35 H95.3 Z" fill="#111314"/><path d="M91.20 406.45 L95.20 410.45 H91.20 Z" fill="#fff"/><path d="M88.50,412.65 L89.88,416.35 L93.83,416.52 L90.74,418.98 L91.79,422.78 L88.50,420.60 L85.21,422.78 L86.26,418.98 L83.17,416.52 L87.12,416.35 Z" fill="#15181b"/><path d="M82 430.1 H90.3 L95.3 435.1 V447.3 H82 Z" fill="#fff"/><path d="M90.30 430.1 V435.10 H95.3 Z" fill="#111314"/><path d="M91.20 430.20 L95.20 434.20 H91.20 Z" fill="#fff"/><path d="M88.50,436.40 L89.88,440.10 L93.83,440.27 L90.74,442.73 L91.79,446.53 L88.50,444.35 L85.21,446.53 L86.26,442.73 L83.17,440.27 L87.12,440.10 Z" fill="#15181b"/><path d="M82 453.85 H90.3 L95.3 458.85 V471.05 H82 Z" fill="#fff"/><path d="M90.30 453.85 V458.85 H95.3 Z" fill="#111314"/><path d="M91.20 453.95 L95.20 457.95 H91.20 Z" fill="#fff"/><path d="M88.50,460.15 L89.88,463.85 L93.83,464.02 L90.74,466.48 L91.79,470.28 L88.50,468.10 L85.21,470.28 L86.26,466.48 L83.17,464.02 L87.12,463.85 Z" fill="#15181b"/><path d="M82 477.6 H90.3 L95.3 482.6 V494.8 H82 Z" fill="#fff"/><path d="M90.30 477.6 V482.60 H95.3 Z" fill="#111314"/><path d="M91.20 477.70 L95.20 481.70 H91.20 Z" fill="#fff"/><path d="M88.50,483.90 L89.88,487.60 L93.83,487.77 L90.74,490.23 L91.79,494.03 L88.50,491.85 L85.21,494.03 L86.26,490.23 L83.17,487.77 L87.12,487.60 Z" fill="#15181b"/><path d="M33.800000000000004 505.65000000000003 L40.400000000000006 511.05 L33.800000000000004 516.45 Z" fill="#8f94a3"/><path d="M54.6 502.05 H59.800000000000004 L61.2 503.45 H72.2 V505.65000000000003 H54.6 Z" fill="#fff"/><path d="M54.6 507.05 H72.2 V519.05 H54.6 Z" fill="#fff"/></svg></div>
<svg style="position:absolute;left:265.00px;top:197.00px;" width="15" height="510" viewBox="0 0 15 510"><path d="M6.4 11.2 L9.6 7 L12.8 11.2 Z" fill="#4a505a"/><path d="M6.8 501 H13 L9.9 504.8 Z" fill="#4a505a"/></svg>
<div style="left:269.00px;top:213.00px;width:10.40px;height:262.50px;background:#3d444e;border-radius:5px"></div>
<div style="left:46.70px;top:715.30px;width:192.00px;height:25.80px;background:#101213;border-radius:5px"></div>
<div class="t" style="left:49.00px;top:721.00px;font-size:16px;color:#d1d8e4;;letter-spacing:0.733px">soft</div>
<svg style="position:absolute;left:215.00px;top:724.00px;" width="12" height="8.6" viewBox="0 0 12 8.6"><path d="M0 4.3 L3.6 0 H12 V8.6 H3.6 Z" fill="#b8bcc4"/><path d="M6 2.6 L9.4 6 M9.4 2.6 L6 6" stroke="#e8e9ec" stroke-width="1.1"/></svg>
<div style="left:246.40px;top:715.20px;width:33.80px;height:26.40px;background:#4d545e;border-radius:3px;border:1px solid #5f6772;box-shadow:0 0 0 1px #1c1f23"></div>
<svg style="position:absolute;left:246.40px;top:715.20px;" width="33.8" height="26.4" viewBox="0 0 33.8 26.4"><path d="M24.6 9.6 A8.8 8.8 0 1 0 25.8 15.6" fill="none" stroke="#fff" stroke-width="2.4"/><path d="M19.4 9.8 L26.6 3.4 V10.8 Z" fill="#fff"/></svg>
<svg style="position:absolute;left:0;top:0" width="1273" height="749" viewBox="0 0 1273 749"><defs><pattern id="bgp" x="0" y="0" width="20" height="20" patternUnits="userSpaceOnUse"><rect x="3.8" y="3.7" width="3.3" height="1.3" rx=".6" fill="#f4f4f4"/><rect x="15.9" y="3.7" width="3.3" height="1.3" rx=".6" fill="#f4f4f4"/><rect x="18.9" y="8.7" width="3.4" height="1.3" rx=".5" fill="#fff"/><rect x="-1.1" y="8.7" width="3.4" height="1.3" rx=".5" fill="#fff"/></pattern></defs><rect x="294" y="139" width="974" height="597.4" fill="#111314"/><rect x="294" y="139" width="974" height="597.4" fill="url(#bgp)"/></svg>
<div style="left:294.00px;top:736.40px;width:979.00px;height:12.60px;background:#262b30"></div>
<div style="left:1268.00px;top:139.00px;width:5.00px;height:597.40px;background:#262b30"></div>
<div style="left:1270.60px;top:156.00px;width:8.00px;height:447.40px;background:linear-gradient(90deg,#2f353c,#414852 2px);border-radius:3px"></div>
<div style="left:309.20px;top:740.40px;width:683.00px;height:14.00px;background:#3f4650;border-radius:4px"></div>
<svg style="position:absolute;left:299.00px;top:742.00px;" width="8" height="8" viewBox="0 0 8 8"><path d="M5 0.6 V6.6 L0.6 3.6 Z" fill="#4c525c"/></svg>
<svg style="position:absolute;left:1257.00px;top:742.00px;" width="8" height="8" viewBox="0 0 8 8"><path d="M1.4 0.8 V6.8 L5.8 3.8 Z" fill="#4c525c"/></svg>
<div style="left:1268.00px;top:736.40px;width:5.00px;height:13.00px;background:#111314"></div>
<div id="se" style="left:300px;top:146px;width:968px;height:590.4px;overflow:hidden;background:#262b30;clip-path:polygon(4.6px 0,100% 0,100% 100%,0 100%,0 6.2px)">
<div style="left:0.00px;top:0.00px;width:970.00px;height:29.00px;background:linear-gradient(#656e7b,#3b4149)"></div>
<svg style="position:absolute;left:0.00px;top:0.00px;" width="34" height="29" viewBox="0 0 34 29"><rect x="4.7" y="5.50" width="6.76" height="4.90" fill="#fff"/><rect x="11.46" y="5.50" width="6.08" height="4.90" fill="#b4b8be"/><rect x="17.54" y="5.50" width="6.76" height="4.90" fill="#fff"/><rect x="4.7" y="11.25" width="6.76" height="4.90" fill="#fff"/><rect x="11.46" y="11.25" width="6.08" height="4.90" fill="#b4b8be"/><rect x="17.54" y="11.25" width="6.76" height="4.90" fill="#fff"/><rect x="4.7" y="17.00" width="6.76" height="4.90" fill="#fff"/><rect x="11.46" y="17.00" width="6.08" height="4.90" fill="#b4b8be"/><rect x="17.54" y="17.00" width="6.76" height="4.90" fill="#fff"/></svg>
<div class="t" style="left:582.60px;top:7.00px;font-size:14.2px;color:#dde1ec;text-shadow:1px 1px 0 #0c0d0f;letter-spacing:0.23px">Song-Editor</div>
<div style="left:0.00px;top:29.00px;width:1.00px;height:600.00px;background:#6a7c93"></div>
<div style="left:1.00px;top:29.00px;width:4.00px;height:600.00px;background:#272c31"></div>
<div style="left:5.00px;top:29.00px;width:970.00px;height:48.50px;background:linear-gradient(#464d59,#2a2f35)"></div>
<div class="tb" style="left:8.80px;top:33.00px;width:39.00px;height:40.40px;"></div>
<div class="tb" style="left:50.20px;top:33.00px;width:39.00px;height:40.40px;"></div>
<div class="tb" style="left:96.40px;top:33.00px;width:39.00px;height:40.40px;"></div>
<div class="tb" style="left:137.80px;top:33.00px;width:39.00px;height:40.40px;"></div>
<div class="tb" style="left:179.20px;top:33.00px;width:39.00px;height:40.40px;"></div>
<div style="left:225.00px;top:33.00px;width:39.00px;height:40.40px;border-radius:3px;background:linear-gradient(#1b1e22,#262a30);box-shadow:0 1px 0 rgba(120,135,155,.35)"></div>
<div class="tb" style="left:266.40px;top:33.00px;width:39.00px;height:40.40px;"></div>
<div class="tb" style="left:312.70px;top:33.00px;width:39.00px;height:40.40px;"></div>
<div class="tb" style="left:354.10px;top:33.00px;width:39.00px;height:40.40px;"></div>
<div class="tb" style="left:395.40px;top:33.00px;width:39.00px;height:40.40px;"></div>
<svg style="position:absolute;left:8.80px;top:33.00px;" width="39" height="40.4" viewBox="0 0 39 40.4"><path d="M11.4 10.4 L26.2 19.8 L11.4 30 Z" fill="#fff"/></svg>
<svg style="position:absolute;left:50.20px;top:33.00px;" width="39" height="40.4" viewBox="0 0 39 40.4"><rect x="9.8" y="10.8" width="18.2" height="18.2" fill="#fff"/></svg>
<svg style="position:absolute;left:96.40px;top:33.00px;" width="39" height="40.4" viewBox="0 0 39 40.4"><rect x="6.80" y="10.80" width="6.4" height="8.2" fill="#fff"/><rect x="15.40" y="10.80" width="6.4" height="8.2" fill="#fff"/><rect x="24.00" y="10.80" width="6.4" height="8.2" fill="#fff"/><rect x="6.80" y="20.80" width="6.4" height="8.2" fill="#fff"/><rect x="15.40" y="20.80" width="6.4" height="8.2" fill="#fff"/><path d="M23.8 25.4 h8.4 M28 21.2 v8.4" stroke="#fff" stroke-width="2.2"/></svg>
<svg style="position:absolute;left:137.80px;top:33.00px;" width="39" height="40.4" viewBox="0 0 39 40.4"><rect x="5.90" y="17.00" width="1.35" height="5.6" rx="0.675" fill="#fff"/><rect x="8.52" y="15.55" width="1.35" height="8.5" rx="0.675" fill="#fff"/><rect x="11.14" y="9.80" width="1.35" height="20" rx="0.675" fill="#fff"/><rect x="13.76" y="14.50" width="1.35" height="10.6" rx="0.675" fill="#fff"/><rect x="16.38" y="16.30" width="1.35" height="7" rx="0.675" fill="#fff"/><rect x="19.00" y="14.15" width="1.35" height="11.3" rx="0.675" fill="#fff"/><rect x="21.62" y="9.80" width="1.35" height="20" rx="0.675" fill="#fff"/><rect x="24.24" y="14.80" width="1.35" height="10" rx="0.675" fill="#fff"/><rect x="26.86" y="16.60" width="1.35" height="6.4" rx="0.675" fill="#fff"/><rect x="29.48" y="17.70" width="1.35" height="4.2" rx="0.675" fill="#fff"/><path d="M21 26.6 h9.4 M25.7 21.9 v9.4" stroke="#4a525c" stroke-width="5"/><path d="M21 26.6 h9.4 M25.7 21.9 v9.4" stroke="#fff" stroke-width="2.5"/></svg>
<svg style="position:absolute;left:179.20px;top:33.00px;" width="39" height="40.4" viewBox="0 0 39 40.4"><path d="M7.4 21 L29.8 11 V30.4 H7.4 Z" fill="#fff"/><path d="M21 25.2 h7.4 M24.7 21.5 v7.4" stroke="#3d444d" stroke-width="1.8"/></svg>
<svg style="position:absolute;left:225.00px;top:33.00px;" width="39" height="40.4" viewBox="0 0 39 40.4"><g transform="translate(18.9 21.6) rotate(-38.8)"><rect x="-10.8" y="-4.8" width="21.2" height="9.6" fill="#fff"/><ellipse cx="-12.6" cy="0" rx="1.1" ry="4.8" fill="#fff"/><rect x="11.4" y="-5.3" width="3.2" height="10.6" rx="1.5" fill="#fff"/><path d="M-14.4 -2 L-17 0 L-14.4 2 Z" fill="#fff"/></g></svg>
<svg style="position:absolute;left:266.40px;top:33.00px;" width="39" height="40.4" viewBox="0 0 39 40.4"><rect x="7.00" y="7.6" width="2.3" height="2.3" fill="#fff"/><rect x="7.00" y="30" width="2.3" height="2.3" fill="#fff"/><rect x="10.73" y="7.6" width="2.3" height="2.3" fill="#fff"/><rect x="10.73" y="30" width="2.3" height="2.3" fill="#fff"/><rect x="7" y="11.33" width="2.3" height="2.3" fill="#fff"/><rect x="29.4" y="11.33" width="2.3" height="2.3" fill="#fff"/><rect x="14.46" y="7.6" width="2.3" height="2.3" fill="#fff"/><rect x="14.46" y="30" width="2.3" height="2.3" fill="#fff"/><rect x="7" y="15.06" width="2.3" height="2.3" fill="#fff"/><rect x="29.4" y="15.06" width="2.3" height="2.3" fill="#fff"/><rect x="18.19" y="7.6" width="2.3" height="2.3" fill="#fff"/><rect x="18.19" y="30" width="2.3" height="2.3" fill="#fff"/><rect x="7" y="18.79" width="2.3" height="2.3" fill="#fff"/><rect x="29.4" y="18.79" width="2.3" height="2.3" fill="#fff"/><rect x="21.92" y="7.6" width="2.3" height="2.3" fill="#fff"/><rect x="21.92" y="30" width="2.3" height="2.3" fill="#fff"/><rect x="7" y="22.52" width="2.3" height="2.3" fill="#fff"/><rect x="29.4" y="22.52" width="2.3" height="2.3" fill="#fff"/><rect x="25.65" y="7.6" width="2.3" height="2.3" fill="#fff"/><rect x="25.65" y="30" width="2.3" height="2.3" fill="#fff"/><rect x="7" y="26.25" width="2.3" height="2.3" fill="#fff"/><rect x="29.4" y="26.25" width="2.3" height="2.3" fill="#fff"/><rect x="29.38" y="7.6" width="2.3" height="2.3" fill="#fff"/><rect x="29.38" y="30" width="2.3" height="2.3" fill="#fff"/></svg>
<svg style="position:absolute;left:312.70px;top:33.00px;" width="39" height="40.4" viewBox="0 0 39 40.4"><path d="M8.6 18.2 H21 V13.6 L29.6 20.2 L21 26.8 V22.2 H8.6 Z" fill="#8c929b"/></svg>
<svg style="position:absolute;left:354.10px;top:33.00px;" width="39" height="40.4" viewBox="0 0 39 40.4"><path d="M9.2 10.8 L19.4 20.3 L9.2 29.8 Z M29.8 10.8 L19.6 20.3 L29.8 29.8 Z" fill="#8c929b"/></svg>
<svg style="position:absolute;left:395.40px;top:33.00px;" width="39" height="40.4" viewBox="0 0 39 40.4"><rect x="7.6" y="12" width="2.2" height="16.6" fill="#fff"/><path d="M20.4 14.2 V26.4 L12.6 20.3 Z M30 14.2 V26.4 L22.2 20.3 Z" fill="#fff"/></svg>
<svg style="position:absolute;left:440.00px;top:38.00px;" width="30" height="30" viewBox="0 0 30 30"><circle cx="12.4" cy="12.2" r="9.3" fill="none" stroke="#fff" stroke-width="2.5"/><path d="M19 19.2 L27.4 27" stroke="#fff" stroke-width="3" stroke-linecap="round"/></svg>
<div style="left:472.00px;top:39.00px;width:96.40px;height:25.50px;border-radius:2px;background:linear-gradient(#1b1e22,#2b3036);box-shadow:inset 0 1px 0 #121416, 0 1px 0 rgba(255,255,255,.05)"></div>
<div style="left:543.40px;top:39.60px;width:1.00px;height:24.40px;background:#15171a"></div>
<div class="t" style="left:476.40px;top:45.00px;font-size:14.4px;color:#d1d8e4;;letter-spacing:0.0px">100%</div>
<svg style="position:absolute;left:552.00px;top:47.00px;" width="12" height="14" viewBox="0 0 12 14"><path d="M10 1.6 V12 L3 6.8 Z" fill="#fff"/></svg>
<div style="left:382.00px;top:78.80px;width:21.00px;height:19.80px;background:#3c434d"></div>
<div class="t" style="left:372.00px;top:83.00px;width:40px;text-align:center;font-size:11.6px;color:#cfd4e0;;-webkit-text-stroke-width:.08px">1</div>
<div style="left:461.80px;top:83.60px;width:1.60px;height:10.20px;background:#b4b9c4"></div>
<div class="t" style="left:469.20px;top:83.00px;font-size:11.6px;color:#cfd4e0;;letter-spacing:0.6px;-webkit-text-stroke-width:.08px">5</div>
<div style="left:541.80px;top:83.60px;width:1.60px;height:10.20px;background:#b4b9c4"></div>
<div class="t" style="left:549.20px;top:83.00px;font-size:11.6px;color:#cfd4e0;;letter-spacing:-0.4px;-webkit-text-stroke-width:.08px">9</div>
<div style="left:621.80px;top:83.60px;width:1.60px;height:10.20px;background:#b4b9c4"></div>
<div class="t" style="left:629.20px;top:83.00px;font-size:11.6px;color:#cfd4e0;;letter-spacing:-1.0px;-webkit-text-stroke-width:.08px">13</div>
<div style="left:701.80px;top:83.60px;width:1.60px;height:10.20px;background:#b4b9c4"></div>
<div class="t" style="left:709.20px;top:83.00px;font-size:11.6px;color:#cfd4e0;;letter-spacing:-1.2px;-webkit-text-stroke-width:.08px">17</div>
<div style="left:781.80px;top:83.60px;width:1.60px;height:10.20px;background:#b4b9c4"></div>
<div class="t" style="left:789.20px;top:83.00px;font-size:11.6px;color:#cfd4e0;;letter-spacing:-0.2px;-webkit-text-stroke-width:.08px">21</div>
<div style="left:861.80px;top:83.60px;width:1.60px;height:10.20px;background:#b4b9c4"></div>
<div class="t" style="left:869.20px;top:83.00px;font-size:11.6px;color:#cfd4e0;;letter-spacing:-0.2px;-webkit-text-stroke-width:.08px">25</div>
<div style="left:941.80px;top:83.60px;width:1.60px;height:10.20px;background:#b4b9c4"></div>
<div class="t" style="left:949.20px;top:83.00px;font-size:11.6px;color:#cfd4e0;;letter-spacing:-0.2px;-webkit-text-stroke-width:.08px">29</div>
<svg width="0" height="0" style="position:absolute"><defs><filter id="ledblur" x="-30%" y="-60%" width="160%" height="220%"><feGaussianBlur stdDeviation="1"/></filter></defs></svg>
<svg width="0" height="0" style="position:absolute"><defs><linearGradient id="igr" x1="0" y1="0" x2="0" y2="1"><stop offset="0" stop-color="#5d9175"/><stop offset="1" stop-color="#6d9d89"/></linearGradient></defs></svg>
<div style="left:5.00px;top:100.40px;width:378.40px;height:38.30px;background:#3b424a"></div>
<svg style="position:absolute;left:5.00px;top:100.40px;" width="378.4" height="38.3" viewBox="0 0 378.4 38.3"><rect x="3" y="2.60" width="2" height="2" fill="#24282d"/><rect x="8" y="6.40" width="2" height="2" fill="#24282d"/><rect x="3" y="8.85" width="2" height="2" fill="#24282d"/><rect x="8" y="12.65" width="2" height="2" fill="#24282d"/><rect x="3" y="15.10" width="2" height="2" fill="#24282d"/><rect x="8" y="18.90" width="2" height="2" fill="#24282d"/><rect x="3" y="21.35" width="2" height="2" fill="#24282d"/><rect x="8" y="25.15" width="2" height="2" fill="#24282d"/><rect x="3" y="27.60" width="2" height="2" fill="#24282d"/><rect x="8" y="31.40" width="2" height="2" fill="#24282d"/><rect x="29.85" y="8.000000000000002" width="3.3" height="6.4" transform="rotate(0 31.5 20.6)" fill="#fff"/><path d="M29.2 13.600000000000001 L31.1 8.500000000000002 H31.9 L33.8 13.600000000000001 Z" transform="rotate(45 31.5 20.6)" fill="#fff"/><rect x="29.85" y="8.000000000000002" width="3.3" height="6.4" transform="rotate(90 31.5 20.6)" fill="#fff"/><path d="M29.2 13.600000000000001 L31.1 8.500000000000002 H31.9 L33.8 13.600000000000001 Z" transform="rotate(135 31.5 20.6)" fill="#fff"/><rect x="29.85" y="8.000000000000002" width="3.3" height="6.4" transform="rotate(180 31.5 20.6)" fill="#fff"/><path d="M29.2 13.600000000000001 L31.1 8.500000000000002 H31.9 L33.8 13.600000000000001 Z" transform="rotate(225 31.5 20.6)" fill="#fff"/><rect x="29.85" y="8.000000000000002" width="3.3" height="6.4" transform="rotate(270 31.5 20.6)" fill="#fff"/><path d="M29.2 13.600000000000001 L31.1 8.500000000000002 H31.9 L33.8 13.600000000000001 Z" transform="rotate(315 31.5 20.6)" fill="#fff"/><circle cx="31.5" cy="20.6" r="7.9" fill="#fff"/><circle cx="31.5" cy="20.6" r="4.7" fill="#3b424a"/><rect x="60.2" y="15.8" width="14.8" height="7.2" rx="2" fill="#3fe07f" opacity=".45" filter="url(#ledblur)"/><rect x="61.2" y="16.8" width="12.8" height="5.2" rx=".8" fill="#4fee8a"/><rect x="62.6" y="18.1" width="10" height="2" rx="1" fill="#9affc2" opacity=".75"/><rect x="80" y="15.4" width="15" height="7.6" rx="1.2" fill="#23282e"/><rect x="81.2" y="16.6" width="12.8" height="5.2" fill="#47535f"/><rect x="81.2" y="16.6" width="12.8" height="1.8" fill="#5e6f80" opacity=".8"/><rect x="107.90" y="16.90" width="1.3" height="3.2" rx="0.65" fill="#fff"/><rect x="110.40" y="14.40" width="1.3" height="8.2" rx="0.65" fill="#fff"/><rect x="112.90" y="8.30" width="1.3" height="20.4" rx="0.65" fill="#fff"/><rect x="115.40" y="12.50" width="1.3" height="12" rx="0.65" fill="#fff"/><rect x="117.90" y="14.40" width="1.3" height="8.2" rx="0.65" fill="#fff"/><rect x="120.40" y="13.15" width="1.3" height="10.7" rx="0.65" fill="#fff"/><rect x="122.90" y="8.75" width="1.3" height="19.5" rx="0.65" fill="#fff"/><rect x="125.40" y="12.65" width="1.3" height="11.7" rx="0.65" fill="#fff"/><rect x="127.90" y="14.00" width="1.3" height="9" rx="0.65" fill="#fff"/><rect x="130.40" y="13.80" width="1.3" height="9.4" rx="0.65" fill="#fff"/><path d="M322.00 22.20 A10.6 10.6 0 1 1 337.00 22.20" fill="none" stroke="#2b6e4a" stroke-width="2.2"/><path d="M322.00 22.20 A10.6 10.6 0 0 1 329.50 4.10" fill="none" stroke="#1fe07c" stroke-width="2.4"/><circle cx="329.5" cy="14.7" r="7.2" fill="#2a6a48"/><path d="M329.50 14.10 L329.50 4.30" stroke="#1fe07c" stroke-width="2.2"/><path d="M352.50 22.20 A10.6 10.6 0 1 1 367.50 22.20" fill="none" stroke="#2b6e4a" stroke-width="2.2"/><circle cx="360" cy="14.7" r="7.2" fill="#2a6a48"/><path d="M360.00 14.10 L360.00 4.30" stroke="#1fe07c" stroke-width="2.2"/></svg>
<div class="t" style="left:139.80px;top:113.00px;font-size:14px;color:#e4e8f0;;letter-spacing:-0.145px">Sample track</div>
<div class="t" style="left:324.40px;top:129.00px;font-size:10.2px;color:#e4e8f0;;letter-spacing:0.0px;-webkit-text-stroke-width:.08px">VOL</div>
<div class="t" style="left:354.40px;top:129.00px;font-size:10.2px;color:#e4e8f0;;letter-spacing:0.5px;-webkit-text-stroke-width:.08px">PAN</div>
<div style="left:5.00px;top:140.40px;width:378.40px;height:38.30px;background:#3b424a"></div>
<svg style="position:absolute;left:5.00px;top:140.40px;" width="378.4" height="38.3" viewBox="0 0 378.4 38.3"><rect x="3" y="2.60" width="2" height="2" fill="#24282d"/><rect x="8" y="6.40" width="2" height="2" fill="#24282d"/><rect x="3" y="8.85" width="2" height="2" fill="#24282d"/><rect x="8" y="12.65" width="2" height="2" fill="#24282d"/><rect x="3" y="15.10" width="2" height="2" fill="#24282d"/><rect x="8" y="18.90" width="2" height="2" fill="#24282d"/><rect x="3" y="21.35" width="2" height="2" fill="#24282d"/><rect x="8" y="25.15" width="2" height="2" fill="#24282d"/><rect x="3" y="27.60" width="2" height="2" fill="#24282d"/><rect x="8" y="31.40" width="2" height="2" fill="#24282d"/><rect x="29.85" y="8.000000000000002" width="3.3" height="6.4" transform="rotate(0 31.5 20.6)" fill="#fff"/><path d="M29.2 13.600000000000001 L31.1 8.500000000000002 H31.9 L33.8 13.600000000000001 Z" transform="rotate(45 31.5 20.6)" fill="#fff"/><rect x="29.85" y="8.000000000000002" width="3.3" height="6.4" transform="rotate(90 31.5 20.6)" fill="#fff"/><path d="M29.2 13.600000000000001 L31.1 8.500000000000002 H31.9 L33.8 13.600000000000001 Z" transform="rotate(135 31.5 20.6)" fill="#fff"/><rect x="29.85" y="8.000000000000002" width="3.3" height="6.4" transform="rotate(180 31.5 20.6)" fill="#fff"/><path d="M29.2 13.600000000000001 L31.1 8.500000000000002 H31.9 L33.8 13.600000000000001 Z" transform="rotate(225 31.5 20.6)" fill="#fff"/><rect x="29.85" y="8.000000000000002" width="3.3" height="6.4" transform="rotate(270 31.5 20.6)" fill="#fff"/><path d="M29.2 13.600000000000001 L31.1 8.500000000000002 H31.9 L33.8 13.600000000000001 Z" transform="rotate(315 31.5 20.6)" fill="#fff"/><circle cx="31.5" cy="20.6" r="7.9" fill="#fff"/><circle cx="31.5" cy="20.6" r="4.7" fill="#3b424a"/><rect x="60.2" y="15.8" width="14.8" height="7.2" rx="2" fill="#3fe07f" opacity=".45" filter="url(#ledblur)"/><rect x="61.2" y="16.8" width="12.8" height="5.2" rx=".8" fill="#4fee8a"/><rect x="62.6" y="18.1" width="10" height="2" rx="1" fill="#9affc2" opacity=".75"/><rect x="80" y="15.4" width="15" height="7.6" rx="1.2" fill="#23282e"/><rect x="81.2" y="16.6" width="12.8" height="5.2" fill="#47535f"/><rect x="81.2" y="16.6" width="12.8" height="1.8" fill="#5e6f80" opacity=".8"/><rect x="107.80" y="9.80" width="6.9" height="8.2" fill="#fff"/><rect x="116.40" y="9.80" width="6.9" height="8.2" fill="#fff"/><rect x="125.00" y="9.80" width="6.9" height="8.2" fill="#fff"/><rect x="107.80" y="19.70" width="6.9" height="8.2" fill="#fff"/><rect x="116.40" y="19.70" width="6.9" height="8.2" fill="#fff"/><rect x="125.00" y="19.70" width="6.9" height="8.2" fill="#fff"/></svg>
<div class="t" style="left:139.80px;top:153.00px;font-size:14px;color:#e4e8f0;;letter-spacing:-0.021px">Beat/Bassline 0</div>
<div style="left:5.00px;top:180.40px;width:378.40px;height:38.30px;background:#3b424a"></div>
<svg style="position:absolute;left:5.00px;top:180.40px;" width="378.4" height="38.3" viewBox="0 0 378.4 38.3"><rect x="3" y="2.60" width="2" height="2" fill="#24282d"/><rect x="8" y="6.40" width="2" height="2" fill="#24282d"/><rect x="3" y="8.85" width="2" height="2" fill="#24282d"/><rect x="8" y="12.65" width="2" height="2" fill="#24282d"/><rect x="3" y="15.10" width="2" height="2" fill="#24282d"/><rect x="8" y="18.90" width="2" height="2" fill="#24282d"/><rect x="3" y="21.35" width="2" height="2" fill="#24282d"/><rect x="8" y="25.15" width="2" height="2" fill="#24282d"/><rect x="3" y="27.60" width="2" height="2" fill="#24282d"/><rect x="8" y="31.40" width="2" height="2" fill="#24282d"/><rect x="29.85" y="8.000000000000002" width="3.3" height="6.4" transform="rotate(0 31.5 20.6)" fill="#fff"/><path d="M29.2 13.600000000000001 L31.1 8.500000000000002 H31.9 L33.8 13.600000000000001 Z" transform="rotate(45 31.5 20.6)" fill="#fff"/><rect x="29.85" y="8.000000000000002" width="3.3" height="6.4" transform="rotate(90 31.5 20.6)" fill="#fff"/><path d="M29.2 13.600000000000001 L31.1 8.500000000000002 H31.9 L33.8 13.600000000000001 Z" transform="rotate(135 31.5 20.6)" fill="#fff"/><rect x="29.85" y="8.000000000000002" width="3.3" height="6.4" transform="rotate(180 31.5 20.6)" fill="#fff"/><path d="M29.2 13.600000000000001 L31.1 8.500000000000002 H31.9 L33.8 13.600000000000001 Z" transform="rotate(225 31.5 20.6)" fill="#fff"/><rect x="29.85" y="8.000000000000002" width="3.3" height="6.4" transform="rotate(270 31.5 20.6)" fill="#fff"/><path d="M29.2 13.600000000000001 L31.1 8.500000000000002 H31.9 L33.8 13.600000000000001 Z" transform="rotate(315 31.5 20.6)" fill="#fff"/><circle cx="31.5" cy="20.6" r="7.9" fill="#fff"/><circle cx="31.5" cy="20.6" r="4.7" fill="#3b424a"/><rect x="60.2" y="15.8" width="14.8" height="7.2" rx="2" fill="#3fe07f" opacity=".45" filter="url(#ledblur)"/><rect x="61.2" y="16.8" width="12.8" height="5.2" rx=".8" fill="#4fee8a"/><rect x="62.6" y="18.1" width="10" height="2" rx="1" fill="#9affc2" opacity=".75"/><rect x="80" y="15.4" width="15" height="7.6" rx="1.2" fill="#23282e"/><rect x="81.2" y="16.6" width="12.8" height="5.2" fill="#47535f"/><rect x="81.2" y="16.6" width="12.8" height="1.8" fill="#5e6f80" opacity=".8"/><rect x="107.8" y="7.0" width="26.2" height="26" fill="#8a9299"/><rect x="108.39999999999999" y="7.6" width="20.4" height="13.2" fill="url(#igr)"/><path d="M108.39999999999999 13.7 h20.4" stroke="#4c7a63" stroke-width=".8"/><path d="M108.6 13.9 C111.0 17.4 112.39999999999999 20.0 114.0 20.0 C117.0 20.0 119.2 8.6 123.0 8.6 C125.19999999999999 8.6 126.4 12.4 128.6 13.8" fill="none" stroke="#e4eee8" stroke-width="1.05"/><rect x="108.39999999999999" y="20.8" width="20.4" height="11.6" fill="#9399a1"/><path d="M108.8 23.2 h2 M114.19999999999999 23.2 h2 M115.6 26.6 h1.8 M107.99999999999999 26.6 h1.4 M109.8 30.4 h1.6 M113.99999999999999 30.4 h1.6 M112.39999999999999 21.6 v1.2" stroke="#25292d" stroke-width=".9"/><circle cx="112.39999999999999" cy="26.6" r="3.3" fill="#7f9fd6"/><circle cx="113.3" cy="26.9" r="1.7" fill="#b9cae6" opacity=".75"/><circle cx="111.99999999999999" cy="26.6" r=".9" fill="#5e7fb9"/><path d="M119.0 23.2 h2 M124.39999999999999 23.2 h2 M125.8 26.6 h1.8 M118.19999999999999 26.6 h1.4 M120.0 30.4 h1.6 M124.19999999999999 30.4 h1.6 M122.6 21.6 v1.2" stroke="#25292d" stroke-width=".9"/><circle cx="122.6" cy="26.6" r="3.3" fill="#7f9fd6"/><circle cx="123.5" cy="26.9" r="1.7" fill="#b9cae6" opacity=".75"/><circle cx="122.19999999999999" cy="26.6" r=".9" fill="#5e7fb9"/><rect x="128.8" y="8.0" width="4.6" height="24.4" fill="#14a722"/><rect x="130.8" y="8.0" width="1.6" height="24.4" fill="#2cba36" opacity=".6"/><rect x="128.8" y="8.2" width="1.8" height="3.6" fill="#15201a"/><rect x="304" y="3.4" width="10" height="34.4" fill="#272b30"/><rect x="304" y="3.4" width="10" height="1.2" fill="#1f2327"/><rect x="304" y="3.4" width="1.2" height="34.4" fill="#1f2327"/><rect x="312.8" y="3.4" width="1.2" height="34.4" fill="#31363c"/><rect x="304" y="36.6" width="10" height="1.2" fill="#31363c"/><path d="M322.00 22.20 A10.6 10.6 0 1 1 337.00 22.20" fill="none" stroke="#2b6e4a" stroke-width="2.2"/><path d="M322.00 22.20 A10.6 10.6 0 0 1 329.50 4.10" fill="none" stroke="#1fe07c" stroke-width="2.4"/><circle cx="329.5" cy="14.7" r="7.2" fill="#2a6a48"/><path d="M329.50 14.10 L329.50 4.30" stroke="#1fe07c" stroke-width="2.2"/><path d="M352.50 22.20 A10.6 10.6 0 1 1 367.50 22.20" fill="none" stroke="#2b6e4a" stroke-width="2.2"/><circle cx="360" cy="14.7" r="7.2" fill="#2a6a48"/><path d="M360.00 14.10 L360.00 4.30" stroke="#1fe07c" stroke-width="2.2"/></svg>
<div class="t" style="left:324.40px;top:209.00px;font-size:10.2px;color:#e4e8f0;;letter-spacing:0.0px;-webkit-text-stroke-width:.08px">VOL</div>
<div class="t" style="left:354.40px;top:209.00px;font-size:10.2px;color:#e4e8f0;;letter-spacing:0.5px;-webkit-text-stroke-width:.08px">PAN</div>
<div style="left:5.00px;top:220.40px;width:378.40px;height:38.30px;background:#3b424a"></div>
<svg style="position:absolute;left:5.00px;top:220.40px;" width="378.4" height="38.3" viewBox="0 0 378.4 38.3"><rect x="3" y="2.60" width="2" height="2" fill="#24282d"/><rect x="8" y="6.40" width="2" height="2" fill="#24282d"/><rect x="3" y="8.85" width="2" height="2" fill="#24282d"/><rect x="8" y="12.65" width="2" height="2" fill="#24282d"/><rect x="3" y="15.10" width="2" height="2" fill="#24282d"/><rect x="8" y="18.90" width="2" height="2" fill="#24282d"/><rect x="3" y="21.35" width="2" height="2" fill="#24282d"/><rect x="8" y="25.15" width="2" height="2" fill="#24282d"/><rect x="3" y="27.60" width="2" height="2" fill="#24282d"/><rect x="8" y="31.40" width="2" height="2" fill="#24282d"/><rect x="29.85" y="8.000000000000002" width="3.3" height="6.4" transform="rotate(0 31.5 20.6)" fill="#fff"/><path d="M29.2 13.600000000000001 L31.1 8.500000000000002 H31.9 L33.8 13.600000000000001 Z" transform="rotate(45 31.5 20.6)" fill="#fff"/><rect x="29.85" y="8.000000000000002" width="3.3" height="6.4" transform="rotate(90 31.5 20.6)" fill="#fff"/><path d="M29.2 13.600000000000001 L31.1 8.500000000000002 H31.9 L33.8 13.600000000000001 Z" transform="rotate(135 31.5 20.6)" fill="#fff"/><rect x="29.85" y="8.000000000000002" width="3.3" height="6.4" transform="rotate(180 31.5 20.6)" fill="#fff"/><path d="M29.2 13.600000000000001 L31.1 8.500000000000002 H31.9 L33.8 13.600000000000001 Z" transform="rotate(225 31.5 20.6)" fill="#fff"/><rect x="29.85" y="8.000000000000002" width="3.3" height="6.4" transform="rotate(270 31.5 20.6)" fill="#fff"/><path d="M29.2 13.600000000000001 L31.1 8.500000000000002 H31.9 L33.8 13.600000000000001 Z" transform="rotate(315 31.5 20.6)" fill="#fff"/><circle cx="31.5" cy="20.6" r="7.9" fill="#fff"/><circle cx="31.5" cy="20.6" r="4.7" fill="#3b424a"/><rect x="60.2" y="15.8" width="14.8" height="7.2" rx="2" fill="#3fe07f" opacity=".45" filter="url(#ledblur)"/><rect x="61.2" y="16.8" width="12.8" height="5.2" rx=".8" fill="#4fee8a"/><rect x="62.6" y="18.1" width="10" height="2" rx="1" fill="#9affc2" opacity=".75"/><rect x="80" y="15.4" width="15" height="7.6" rx="1.2" fill="#23282e"/><rect x="81.2" y="16.6" width="12.8" height="5.2" fill="#47535f"/><rect x="81.2" y="16.6" width="12.8" height="1.8" fill="#5e6f80" opacity=".8"/><rect x="107.8" y="7.0" width="26.2" height="26" fill="#8a9299"/><rect x="108.39999999999999" y="7.6" width="20.4" height="13.2" fill="url(#igr)"/><path d="M108.39999999999999 13.7 h20.4" stroke="#4c7a63" stroke-width=".8"/><path d="M108.6 13.9 C111.0 17.4 112.39999999999999 20.0 114.0 20.0 C117.0 20.0 119.2 8.6 123.0 8.6 C125.19999999999999 8.6 126.4 12.4 128.6 13.8" fill="none" stroke="#e4eee8" stroke-width="1.05"/><rect x="108.39999999999999" y="20.8" width="20.4" height="11.6" fill="#9399a1"/><path d="M108.8 23.2 h2 M114.19999999999999 23.2 h2 M115.6 26.6 h1.8 M107.99999999999999 26.6 h1.4 M109.8 30.4 h1.6 M113.99999999999999 30.4 h1.6 M112.39999999999999 21.6 v1.2" stroke="#25292d" stroke-width=".9"/><circle cx="112.39999999999999" cy="26.6" r="3.3" fill="#7f9fd6"/><circle cx="113.3" cy="26.9" r="1.7" fill="#b9cae6" opacity=".75"/><circle cx="111.99999999999999" cy="26.6" r=".9" fill="#5e7fb9"/><path d="M119.0 23.2 h2 M124.39999999999999 23.2 h2 M125.8 26.6 h1.8 M118.19999999999999 26.6 h1.4 M120.0 30.4 h1.6 M124.19999999999999 30.4 h1.6 M122.6 21.6 v1.2" stroke="#25292d" stroke-width=".9"/><circle cx="122.6" cy="26.6" r="3.3" fill="#7f9fd6"/><circle cx="123.5" cy="26.9" r="1.7" fill="#b9cae6" opacity=".75"/><circle cx="122.19999999999999" cy="26.6" r=".9" fill="#5e7fb9"/><rect x="128.8" y="8.0" width="4.6" height="24.4" fill="#14a722"/><rect x="130.8" y="8.0" width="1.6" height="24.4" fill="#2cba36" opacity=".6"/><rect x="128.8" y="8.2" width="1.8" height="3.6" fill="#15201a"/><rect x="304" y="3.4" width="10" height="34.4" fill="#272b30"/><rect x="304" y="3.4" width="10" height="1.2" fill="#1f2327"/><rect x="304" y="3.4" width="1.2" height="34.4" fill="#1f2327"/><rect x="312.8" y="3.4" width="1.2" height="34.4" fill="#31363c"/><rect x="304" y="36.6" width="10" height="1.2" fill="#31363c"/><path d="M322.00 22.20 A10.6 10.6 0 1 1 337.00 22.20" fill="none" stroke="#2b6e4a" stroke-width="2.2"/><path d="M322.00 22.20 A10.6 10.6 0 1 1 337.00 22.20" fill="none" stroke="#1fe07c" stroke-width="2.4"/><circle cx="329.5" cy="14.7" r="7.2" fill="#2a6a48"/><path d="M329.92 15.12 L336.85 22.05" stroke="#1fe07c" stroke-width="2.2"/><path d="M352.50 22.20 A10.6 10.6 0 1 1 367.50 22.20" fill="none" stroke="#2b6e4a" stroke-width="2.2"/><circle cx="360" cy="14.7" r="7.2" fill="#2a6a48"/><path d="M360.00 14.10 L360.00 4.30" stroke="#1fe07c" stroke-width="2.2"/></svg>
<div class="t" style="left:140.80px;top:233.00px;font-size:14px;color:#e4e8f0;;letter-spacing:-0.417px">Organ 3</div>
<div class="t" style="left:324.40px;top:249.00px;font-size:10.2px;color:#e4e8f0;;letter-spacing:0.0px;-webkit-text-stroke-width:.08px">VOL</div>
<div class="t" style="left:354.40px;top:249.00px;font-size:10.2px;color:#e4e8f0;;letter-spacing:0.5px;-webkit-text-stroke-width:.08px">PAN</div>
<div style="left:5.00px;top:260.40px;width:378.40px;height:38.30px;background:#3b424a"></div>
<svg style="position:absolute;left:5.00px;top:260.40px;" width="378.4" height="38.3" viewBox="0 0 378.4 38.3"><rect x="3" y="2.60" width="2" height="2" fill="#24282d"/><rect x="8" y="6.40" width="2" height="2" fill="#24282d"/><rect x="3" y="8.85" width="2" height="2" fill="#24282d"/><rect x="8" y="12.65" width="2" height="2" fill="#24282d"/><rect x="3" y="15.10" width="2" height="2" fill="#24282d"/><rect x="8" y="18.90" width="2" height="2" fill="#24282d"/><rect x="3" y="21.35" width="2" height="2" fill="#24282d"/><rect x="8" y="25.15" width="2" height="2" fill="#24282d"/><rect x="3" y="27.60" width="2" height="2" fill="#24282d"/><rect x="8" y="31.40" width="2" height="2" fill="#24282d"/><rect x="29.85" y="8.000000000000002" width="3.3" height="6.4" transform="rotate(0 31.5 20.6)" fill="#fff"/><path d="M29.2 13.600000000000001 L31.1 8.500000000000002 H31.9 L33.8 13.600000000000001 Z" transform="rotate(45 31.5 20.6)" fill="#fff"/><rect x="29.85" y="8.000000000000002" width="3.3" height="6.4" transform="rotate(90 31.5 20.6)" fill="#fff"/><path d="M29.2 13.600000000000001 L31.1 8.500000000000002 H31.9 L33.8 13.600000000000001 Z" transform="rotate(135 31.5 20.6)" fill="#fff"/><rect x="29.85" y="8.000000000000002" width="3.3" height="6.4" transform="rotate(180 31.5 20.6)" fill="#fff"/><path d="M29.2 13.600000000000001 L31.1 8.500000000000002 H31.9 L33.8 13.600000000000001 Z" transform="rotate(225 31.5 20.6)" fill="#fff"/><rect x="29.85" y="8.000000000000002" width="3.3" height="6.4" transform="rotate(270 31.5 20.6)" fill="#fff"/><path d="M29.2 13.600000000000001 L31.1 8.500000000000002 H31.9 L33.8 13.600000000000001 Z" transform="rotate(315 31.5 20.6)" fill="#fff"/><circle cx="31.5" cy="20.6" r="7.9" fill="#fff"/><circle cx="31.5" cy="20.6" r="4.7" fill="#3b424a"/><rect x="60.2" y="15.8" width="14.8" height="7.2" rx="2" fill="#3fe07f" opacity=".45" filter="url(#ledblur)"/><rect x="61.2" y="16.8" width="12.8" height="5.2" rx=".8" fill="#4fee8a"/><rect x="62.6" y="18.1" width="10" height="2" rx="1" fill="#9affc2" opacity=".75"/><rect x="80" y="15.4" width="15" height="7.6" rx="1.2" fill="#23282e"/><rect x="81.2" y="16.6" width="12.8" height="5.2" fill="#47535f"/><rect x="81.2" y="16.6" width="12.8" height="1.8" fill="#5e6f80" opacity=".8"/><rect x="107.8" y="7.0" width="26.2" height="26" fill="#8a9299"/><rect x="108.39999999999999" y="7.6" width="20.4" height="13.2" fill="url(#igr)"/><path d="M108.39999999999999 13.7 h20.4" stroke="#4c7a63" stroke-width=".8"/><path d="M108.6 13.9 C111.0 17.4 112.39999999999999 20.0 114.0 20.0 C117.0 20.0 119.2 8.6 123.0 8.6 C125.19999999999999 8.6 126.4 12.4 128.6 13.8" fill="none" stroke="#e4eee8" stroke-width="1.05"/><rect x="108.39999999999999" y="20.8" width="20.4" height="11.6" fill="#9399a1"/><path d="M108.8 23.2 h2 M114.19999999999999 23.2 h2 M115.6 26.6 h1.8 M107.99999999999999 26.6 h1.4 M109.8 30.4 h1.6 M113.99999999999999 30.4 h1.6 M112.39999999999999 21.6 v1.2" stroke="#25292d" stroke-width=".9"/><circle cx="112.39999999999999" cy="26.6" r="3.3" fill="#7f9fd6"/><circle cx="113.3" cy="26.9" r="1.7" fill="#b9cae6" opacity=".75"/><circle cx="111.99999999999999" cy="26.6" r=".9" fill="#5e7fb9"/><path d="M119.0 23.2 h2 M124.39999999999999 23.2 h2 M125.8 26.6 h1.8 M118.19999999999999 26.6 h1.4 M120.0 30.4 h1.6 M124.19999999999999 30.4 h1.6 M122.6 21.6 v1.2" stroke="#25292d" stroke-width=".9"/><circle cx="122.6" cy="26.6" r="3.3" fill="#7f9fd6"/><circle cx="123.5" cy="26.9" r="1.7" fill="#b9cae6" opacity=".75"/><circle cx="122.19999999999999" cy="26.6" r=".9" fill="#5e7fb9"/><rect x="128.8" y="8.0" width="4.6" height="24.4" fill="#14a722"/><rect x="130.8" y="8.0" width="1.6" height="24.4" fill="#2cba36" opacity=".6"/><rect x="128.8" y="8.2" width="1.8" height="3.6" fill="#15201a"/><rect x="304" y="3.4" width="10" height="34.4" fill="#272b30"/><rect x="304" y="3.4" width="10" height="1.2" fill="#1f2327"/><rect x="304" y="3.4" width="1.2" height="34.4" fill="#1f2327"/><rect x="312.8" y="3.4" width="1.2" height="34.4" fill="#31363c"/><rect x="304" y="36.6" width="10" height="1.2" fill="#31363c"/><path d="M322.00 22.20 A10.6 10.6 0 1 1 337.00 22.20" fill="none" stroke="#2b6e4a" stroke-width="2.2"/><path d="M322.00 22.20 A10.6 10.6 0 0 1 329.50 4.10" fill="none" stroke="#1fe07c" stroke-width="2.4"/><circle cx="329.5" cy="14.7" r="7.2" fill="#2a6a48"/><path d="M329.50 14.10 L329.50 4.30" stroke="#1fe07c" stroke-width="2.2"/><path d="M352.50 22.20 A10.6 10.6 0 1 1 367.50 22.20" fill="none" stroke="#2b6e4a" stroke-width="2.2"/><circle cx="360" cy="14.7" r="7.2" fill="#2a6a48"/><path d="M360.00 14.10 L360.00 4.30" stroke="#1fe07c" stroke-width="2.2"/></svg>
<div class="t" style="left:140.80px;top:273.00px;font-size:14px;color:#e4e8f0;;letter-spacing:-0.346px">Analog Piano 1</div>
<div class="t" style="left:324.40px;top:289.00px;font-size:10.2px;color:#e4e8f0;;letter-spacing:0.0px;-webkit-text-stroke-width:.08px">VOL</div>
<div class="t" style="left:354.40px;top:289.00px;font-size:10.2px;color:#e4e8f0;;letter-spacing:0.5px;-webkit-text-stroke-width:.08px">PAN</div>
<div style="left:5.00px;top:300.40px;width:378.40px;height:38.30px;background:#3b424a"></div>
<div style="left:108.60px;top:303.50px;width:196.20px;height:32.00px;border-radius:2px;background:linear-gradient(#14171a,#23272c);box-shadow:0 0 0 1px #4a515b"></div>
<svg style="position:absolute;left:5.00px;top:300.40px;" width="378.4" height="38.3" viewBox="0 0 378.4 38.3"><rect x="3" y="2.60" width="2" height="2" fill="#24282d"/><rect x="8" y="6.40" width="2" height="2" fill="#24282d"/><rect x="3" y="8.85" width="2" height="2" fill="#24282d"/><rect x="8" y="12.65" width="2" height="2" fill="#24282d"/><rect x="3" y="15.10" width="2" height="2" fill="#24282d"/><rect x="8" y="18.90" width="2" height="2" fill="#24282d"/><rect x="3" y="21.35" width="2" height="2" fill="#24282d"/><rect x="8" y="25.15" width="2" height="2" fill="#24282d"/><rect x="3" y="27.60" width="2" height="2" fill="#24282d"/><rect x="8" y="31.40" width="2" height="2" fill="#24282d"/><rect x="29.85" y="8.000000000000002" width="3.3" height="6.4" transform="rotate(0 31.5 20.6)" fill="#fff"/><path d="M29.2 13.600000000000001 L31.1 8.500000000000002 H31.9 L33.8 13.600000000000001 Z" transform="rotate(45 31.5 20.6)" fill="#fff"/><rect x="29.85" y="8.000000000000002" width="3.3" height="6.4" transform="rotate(90 31.5 20.6)" fill="#fff"/><path d="M29.2 13.600000000000001 L31.1 8.500000000000002 H31.9 L33.8 13.600000000000001 Z" transform="rotate(135 31.5 20.6)" fill="#fff"/><rect x="29.85" y="8.000000000000002" width="3.3" height="6.4" transform="rotate(180 31.5 20.6)" fill="#fff"/><path d="M29.2 13.600000000000001 L31.1 8.500000000000002 H31.9 L33.8 13.600000000000001 Z" transform="rotate(225 31.5 20.6)" fill="#fff"/><rect x="29.85" y="8.000000000000002" width="3.3" height="6.4" transform="rotate(270 31.5 20.6)" fill="#fff"/><path d="M29.2 13.600000000000001 L31.1 8.500000000000002 H31.9 L33.8 13.600000000000001 Z" transform="rotate(315 31.5 20.6)" fill="#fff"/><circle cx="31.5" cy="20.6" r="7.9" fill="#fff"/><circle cx="31.5" cy="20.6" r="4.7" fill="#3b424a"/><rect x="60.2" y="15.8" width="14.8" height="7.2" rx="2" fill="#3fe07f" opacity=".45" filter="url(#ledblur)"/><rect x="61.2" y="16.8" width="12.8" height="5.2" rx=".8" fill="#4fee8a"/><rect x="62.6" y="18.1" width="10" height="2" rx="1" fill="#9affc2" opacity=".75"/><rect x="80" y="15.4" width="15" height="7.6" rx="1.2" fill="#23282e"/><rect x="81.2" y="16.6" width="12.8" height="5.2" fill="#47535f"/><rect x="81.2" y="16.6" width="12.8" height="1.8" fill="#5e6f80" opacity=".8"/><rect x="107.8" y="7.0" width="26.2" height="26" fill="#8a9299"/><rect x="108.39999999999999" y="7.6" width="20.4" height="13.2" fill="url(#igr)"/><path d="M108.39999999999999 13.7 h20.4" stroke="#4c7a63" stroke-width=".8"/><path d="M108.6 13.9 C111.0 17.4 112.39999999999999 20.0 114.0 20.0 C117.0 20.0 119.2 8.6 123.0 8.6 C125.19999999999999 8.6 126.4 12.4 128.6 13.8" fill="none" stroke="#e4eee8" stroke-width="1.05"/><rect x="108.39999999999999" y="20.8" width="20.4" height="11.6" fill="#9399a1"/><path d="M108.8 23.2 h2 M114.19999999999999 23.2 h2 M115.6 26.6 h1.8 M107.99999999999999 26.6 h1.4 M109.8 30.4 h1.6 M113.99999999999999 30.4 h1.6 M112.39999999999999 21.6 v1.2" stroke="#25292d" stroke-width=".9"/><circle cx="112.39999999999999" cy="26.6" r="3.3" fill="#7f9fd6"/><circle cx="113.3" cy="26.9" r="1.7" fill="#b9cae6" opacity=".75"/><circle cx="111.99999999999999" cy="26.6" r=".9" fill="#5e7fb9"/><path d="M119.0 23.2 h2 M124.39999999999999 23.2 h2 M125.8 26.6 h1.8 M118.19999999999999 26.6 h1.4 M120.0 30.4 h1.6 M124.19999999999999 30.4 h1.6 M122.6 21.6 v1.2" stroke="#25292d" stroke-width=".9"/><circle cx="122.6" cy="26.6" r="3.3" fill="#7f9fd6"/><circle cx="123.5" cy="26.9" r="1.7" fill="#b9cae6" opacity=".75"/><circle cx="122.19999999999999" cy="26.6" r=".9" fill="#5e7fb9"/><rect x="128.8" y="8.0" width="4.6" height="24.4" fill="#14a722"/><rect x="130.8" y="8.0" width="1.6" height="24.4" fill="#2cba36" opacity=".6"/><rect x="128.8" y="8.2" width="1.8" height="3.6" fill="#15201a"/><rect x="304" y="3.4" width="10" height="34.4" fill="#272b30"/><rect x="304" y="3.4" width="10" height="1.2" fill="#1f2327"/><rect x="304" y="3.4" width="1.2" height="34.4" fill="#1f2327"/><rect x="312.8" y="3.4" width="1.2" height="34.4" fill="#31363c"/><rect x="304" y="36.6" width="10" height="1.2" fill="#31363c"/><path d="M322.00 22.20 A10.6 10.6 0 1 1 337.00 22.20" fill="none" stroke="#2b6e4a" stroke-width="2.2"/><path d="M322.00 22.20 A10.6 10.6 0 1 1 337.00 22.20" fill="none" stroke="#1fe07c" stroke-width="2.4"/><circle cx="329.5" cy="14.7" r="7.2" fill="#2a6a48"/><path d="M329.92 15.12 L336.85 22.05" stroke="#1fe07c" stroke-width="2.2"/><path d="M352.50 22.20 A10.6 10.6 0 1 1 367.50 22.20" fill="none" stroke="#2b6e4a" stroke-width="2.2"/><circle cx="360" cy="14.7" r="7.2" fill="#2a6a48"/><path d="M360.00 14.10 L360.00 4.30" stroke="#1fe07c" stroke-width="2.2"/></svg>
<div class="t" style="left:140.80px;top:313.00px;font-size:14px;color:#e4e8f0;;letter-spacing:0.167px">Soft</div>
<div class="t" style="left:324.40px;top:329.00px;font-size:10.2px;color:#e4e8f0;;letter-spacing:0.0px;-webkit-text-stroke-width:.08px">VOL</div>
<div class="t" style="left:354.40px;top:329.00px;font-size:10.2px;color:#e4e8f0;;letter-spacing:0.5px;-webkit-text-stroke-width:.08px">PAN</div>
<div style="left:5.00px;top:340.40px;width:378.40px;height:38.30px;background:#3b424a"></div>
<svg style="position:absolute;left:5.00px;top:340.40px;" width="378.4" height="38.3" viewBox="0 0 378.4 38.3"><rect x="3" y="2.60" width="2" height="2" fill="#24282d"/><rect x="8" y="6.40" width="2" height="2" fill="#24282d"/><rect x="3" y="8.85" width="2" height="2" fill="#24282d"/><rect x="8" y="12.65" width="2" height="2" fill="#24282d"/><rect x="3" y="15.10" width="2" height="2" fill="#24282d"/><rect x="8" y="18.90" width="2" height="2" fill="#24282d"/><rect x="3" y="21.35" width="2" height="2" fill="#24282d"/><rect x="8" y="25.15" width="2" height="2" fill="#24282d"/><rect x="3" y="27.60" width="2" height="2" fill="#24282d"/><rect x="8" y="31.40" width="2" height="2" fill="#24282d"/><rect x="29.85" y="8.000000000000002" width="3.3" height="6.4" transform="rotate(0 31.5 20.6)" fill="#fff"/><path d="M29.2 13.600000000000001 L31.1 8.500000000000002 H31.9 L33.8 13.600000000000001 Z" transform="rotate(45 31.5 20.6)" fill="#fff"/><rect x="29.85" y="8.000000000000002" width="3.3" height="6.4" transform="rotate(90 31.5 20.6)" fill="#fff"/><path d="M29.2 13.600000000000001 L31.1 8.500000000000002 H31.9 L33.8 13.600000000000001 Z" transform="rotate(135 31.5 20.6)" fill="#fff"/><rect x="29.85" y="8.000000000000002" width="3.3" height="6.4" transform="rotate(180 31.5 20.6)" fill="#fff"/><path d="M29.2 13.600000000000001 L31.1 8.500000000000002 H31.9 L33.8 13.600000000000001 Z" transform="rotate(225 31.5 20.6)" fill="#fff"/><rect x="29.85" y="8.000000000000002" width="3.3" height="6.4" transform="rotate(270 31.5 20.6)" fill="#fff"/><path d="M29.2 13.600000000000001 L31.1 8.500000000000002 H31.9 L33.8 13.600000000000001 Z" transform="rotate(315 31.5 20.6)" fill="#fff"/><circle cx="31.5" cy="20.6" r="7.9" fill="#fff"/><circle cx="31.5" cy="20.6" r="4.7" fill="#3b424a"/><rect x="60.2" y="15.8" width="14.8" height="7.2" rx="2" fill="#3fe07f" opacity=".45" filter="url(#ledblur)"/><rect x="61.2" y="16.8" width="12.8" height="5.2" rx=".8" fill="#4fee8a"/><rect x="62.6" y="18.1" width="10" height="2" rx="1" fill="#9affc2" opacity=".75"/><rect x="80" y="15.4" width="15" height="7.6" rx="1.2" fill="#23282e"/><rect x="81.2" y="16.6" width="12.8" height="5.2" fill="#47535f"/><rect x="81.2" y="16.6" width="12.8" height="1.8" fill="#5e6f80" opacity=".8"/><path d="M108.2 18.2 L131.4 8 V27.6 H108.2 Z" fill="#fff"/></svg>
<div class="t" style="left:139.80px;top:353.00px;font-size:14px;color:#e4e8f0;;letter-spacing:-0.033px">Automation track</div>
<div style="left:5.00px;top:380.40px;width:378.40px;height:38.30px;background:#3b424a"></div>
<svg style="position:absolute;left:5.00px;top:380.40px;" width="378.4" height="38.3" viewBox="0 0 378.4 38.3"><rect x="3" y="2.60" width="2" height="2" fill="#24282d"/><rect x="8" y="6.40" width="2" height="2" fill="#24282d"/><rect x="3" y="8.85" width="2" height="2" fill="#24282d"/><rect x="8" y="12.65" width="2" height="2" fill="#24282d"/><rect x="3" y="15.10" width="2" height="2" fill="#24282d"/><rect x="8" y="18.90" width="2" height="2" fill="#24282d"/><rect x="3" y="21.35" width="2" height="2" fill="#24282d"/><rect x="8" y="25.15" width="2" height="2" fill="#24282d"/><rect x="3" y="27.60" width="2" height="2" fill="#24282d"/><rect x="8" y="31.40" width="2" height="2" fill="#24282d"/><rect x="29.85" y="8.000000000000002" width="3.3" height="6.4" transform="rotate(0 31.5 20.6)" fill="#fff"/><path d="M29.2 13.600000000000001 L31.1 8.500000000000002 H31.9 L33.8 13.600000000000001 Z" transform="rotate(45 31.5 20.6)" fill="#fff"/><rect x="29.85" y="8.000000000000002" width="3.3" height="6.4" transform="rotate(90 31.5 20.6)" fill="#fff"/><path d="M29.2 13.600000000000001 L31.1 8.500000000000002 H31.9 L33.8 13.600000000000001 Z" transform="rotate(135 31.5 20.6)" fill="#fff"/><rect x="29.85" y="8.000000000000002" width="3.3" height="6.4" transform="rotate(180 31.5 20.6)" fill="#fff"/><path d="M29.2 13.600000000000001 L31.1 8.500000000000002 H31.9 L33.8 13.600000000000001 Z" transform="rotate(225 31.5 20.6)" fill="#fff"/><rect x="29.85" y="8.000000000000002" width="3.3" height="6.4" transform="rotate(270 31.5 20.6)" fill="#fff"/><path d="M29.2 13.600000000000001 L31.1 8.500000000000002 H31.9 L33.8 13.600000000000001 Z" transform="rotate(315 31.5 20.6)" fill="#fff"/><circle cx="31.5" cy="20.6" r="7.9" fill="#fff"/><circle cx="31.5" cy="20.6" r="4.7" fill="#3b424a"/><rect x="60.2" y="15.8" width="14.8" height="7.2" rx="2" fill="#3fe07f" opacity=".45" filter="url(#ledblur)"/><rect x="61.2" y="16.8" width="12.8" height="5.2" rx=".8" fill="#4fee8a"/><rect x="62.6" y="18.1" width="10" height="2" rx="1" fill="#9affc2" opacity=".75"/><rect x="80" y="15.4" width="15" height="7.6" rx="1.2" fill="#23282e"/><rect x="81.2" y="16.6" width="12.8" height="5.2" fill="#47535f"/><rect x="81.2" y="16.6" width="12.8" height="1.8" fill="#5e6f80" opacity=".8"/><rect x="107.8" y="7.0" width="26.2" height="26" fill="#8a9299"/><rect x="108.39999999999999" y="7.6" width="20.4" height="13.2" fill="url(#igr)"/><path d="M108.39999999999999 13.7 h20.4" stroke="#4c7a63" stroke-width=".8"/><path d="M108.6 13.9 C111.0 17.4 112.39999999999999 20.0 114.0 20.0 C117.0 20.0 119.2 8.6 123.0 8.6 C125.19999999999999 8.6 126.4 12.4 128.6 13.8" fill="none" stroke="#e4eee8" stroke-width="1.05"/><rect x="108.39999999999999" y="20.8" width="20.4" height="11.6" fill="#9399a1"/><path d="M108.8 23.2 h2 M114.19999999999999 23.2 h2 M115.6 26.6 h1.8 M107.99999999999999 26.6 h1.4 M109.8 30.4 h1.6 M113.99999999999999 30.4 h1.6 M112.39999999999999 21.6 v1.2" stroke="#25292d" stroke-width=".9"/><circle cx="112.39999999999999" cy="26.6" r="3.3" fill="#7f9fd6"/><circle cx="113.3" cy="26.9" r="1.7" fill="#b9cae6" opacity=".75"/><circle cx="111.99999999999999" cy="26.6" r=".9" fill="#5e7fb9"/><path d="M119.0 23.2 h2 M124.39999999999999 23.2 h2 M125.8 26.6 h1.8 M118.19999999999999 26.6 h1.4 M120.0 30.4 h1.6 M124.19999999999999 30.4 h1.6 M122.6 21.6 v1.2" stroke="#25292d" stroke-width=".9"/><circle cx="122.6" cy="26.6" r="3.3" fill="#7f9fd6"/><circle cx="123.5" cy="26.9" r="1.7" fill="#b9cae6" opacity=".75"/><circle cx="122.19999999999999" cy="26.6" r=".9" fill="#5e7fb9"/><rect x="128.8" y="8.0" width="4.6" height="24.4" fill="#14a722"/><rect x="130.8" y="8.0" width="1.6" height="24.4" fill="#2cba36" opacity=".6"/><rect x="128.8" y="8.2" width="1.8" height="3.6" fill="#15201a"/><rect x="304" y="3.4" width="10" height="34.4" fill="#272b30"/><rect x="304" y="3.4" width="10" height="1.2" fill="#1f2327"/><rect x="304" y="3.4" width="1.2" height="34.4" fill="#1f2327"/><rect x="312.8" y="3.4" width="1.2" height="34.4" fill="#31363c"/><rect x="304" y="36.6" width="10" height="1.2" fill="#31363c"/><path d="M322.00 22.20 A10.6 10.6 0 1 1 337.00 22.20" fill="none" stroke="#2b6e4a" stroke-width="2.2"/><path d="M322.00 22.20 A10.6 10.6 0 0 1 329.50 4.10" fill="none" stroke="#1fe07c" stroke-width="2.4"/><circle cx="329.5" cy="14.7" r="7.2" fill="#2a6a48"/><path d="M329.50 14.10 L329.50 4.30" stroke="#1fe07c" stroke-width="2.2"/><path d="M352.50 22.20 A10.6 10.6 0 1 1 367.50 22.20" fill="none" stroke="#2b6e4a" stroke-width="2.2"/><circle cx="360" cy="14.7" r="7.2" fill="#2a6a48"/><path d="M360.00 14.10 L360.00 4.30" stroke="#1fe07c" stroke-width="2.2"/></svg>
<div class="t" style="left:140.80px;top:393.00px;font-size:14px;color:#e4e8f0;;letter-spacing:-0.214px">Trash Synth mod</div>
<div class="t" style="left:324.40px;top:409.00px;font-size:10.2px;color:#e4e8f0;;letter-spacing:0.0px;-webkit-text-stroke-width:.08px">VOL</div>
<div class="t" style="left:354.40px;top:409.00px;font-size:10.2px;color:#e4e8f0;;letter-spacing:0.5px;-webkit-text-stroke-width:.08px">PAN</div>
<div style="left:383.40px;top:100.40px;width:584.60px;height:318.40px;overflow:hidden;background:#0e0f10"><div id="tc" style="left:0;top:0;width:100%;height:100%"><div style="left:0.00px;top:0.00px;width:80.50px;height:320.00px;background:#0e0f10"></div><div style="left:80.00px;top:0.00px;width:80.50px;height:320.00px;background:#141517"></div><div style="left:160.00px;top:0.00px;width:80.50px;height:320.00px;background:#0e0f10"></div><div style="left:240.00px;top:0.00px;width:80.50px;height:320.00px;background:#141517"></div><div style="left:320.00px;top:0.00px;width:80.50px;height:320.00px;background:#0e0f10"></div><div style="left:400.00px;top:0.00px;width:80.50px;height:320.00px;background:#141517"></div><div style="left:480.00px;top:0.00px;width:80.50px;height:320.00px;background:#0e0f10"></div><div style="left:560.00px;top:0.00px;width:80.50px;height:320.00px;background:#141517"></div><div style="left:-0.60px;top:0.00px;width:1.30px;height:320.00px;background:#262b30"></div><div style="left:19.40px;top:0.00px;width:1.30px;height:320.00px;background:#262b30"></div><div style="left:39.40px;top:0.00px;width:1.30px;height:320.00px;background:#262b30"></div><div style="left:59.40px;top:0.00px;width:1.30px;height:320.00px;background:#262b30"></div><div style="left:79.40px;top:0.00px;width:1.30px;height:320.00px;background:#262b30"></div><div style="left:99.40px;top:0.00px;width:1.30px;height:320.00px;background:#262b30"></div><div style="left:119.40px;top:0.00px;width:1.30px;height:320.00px;background:#262b30"></div><div style="left:139.40px;top:0.00px;width:1.30px;height:320.00px;background:#262b30"></div><div style="left:159.40px;top:0.00px;width:1.30px;height:320.00px;background:#262b30"></div><div style="left:179.40px;top:0.00px;width:1.30px;height:320.00px;background:#262b30"></div><div style="left:199.40px;top:0.00px;width:1.30px;height:320.00px;background:#262b30"></div><div style="left:219.40px;top:0.00px;width:1.30px;height:320.00px;background:#262b30"></div><div style="left:239.40px;top:0.00px;width:1.30px;height:320.00px;background:#262b30"></div><div style="left:259.40px;top:0.00px;width:1.30px;height:320.00px;background:#262b30"></div><div style="left:279.40px;top:0.00px;width:1.30px;height:320.00px;background:#262b30"></div><div style="left:299.40px;top:0.00px;width:1.30px;height:320.00px;background:#262b30"></div><div style="left:319.40px;top:0.00px;width:1.30px;height:320.00px;background:#262b30"></div><div style="left:339.40px;top:0.00px;width:1.30px;height:320.00px;background:#262b30"></div><div style="left:359.40px;top:0.00px;width:1.30px;height:320.00px;background:#262b30"></div><div style="left:379.40px;top:0.00px;width:1.30px;height:320.00px;background:#262b30"></div><div style="left:399.40px;top:0.00px;width:1.30px;height:320.00px;background:#262b30"></div><div style="left:419.40px;top:0.00px;width:1.30px;height:320.00px;background:#262b30"></div><div style="left:439.40px;top:0.00px;width:1.30px;height:320.00px;background:#262b30"></div><div style="left:459.40px;top:0.00px;width:1.30px;height:320.00px;background:#262b30"></div><div style="left:479.40px;top:0.00px;width:1.30px;height:320.00px;background:#262b30"></div><div style="left:499.40px;top:0.00px;width:1.30px;height:320.00px;background:#262b30"></div><div style="left:519.40px;top:0.00px;width:1.30px;height:320.00px;background:#262b30"></div><div style="left:539.40px;top:0.00px;width:1.30px;height:320.00px;background:#262b30"></div><div style="left:559.40px;top:0.00px;width:1.30px;height:320.00px;background:#262b30"></div><div style="left:579.40px;top:0.00px;width:1.30px;height:320.00px;background:#262b30"></div><div style="left:599.40px;top:0.00px;width:1.30px;height:320.00px;background:#262b30"></div><div style="left:0.00px;top:-1.60px;width:584.60px;height:1.90px;background:#262b30"></div><div style="left:0.00px;top:38.40px;width:584.60px;height:1.90px;background:#262b30"></div><div style="left:0.00px;top:78.40px;width:584.60px;height:1.90px;background:#262b30"></div><div style="left:0.00px;top:118.40px;width:584.60px;height:1.90px;background:#262b30"></div><div style="left:0.00px;top:158.40px;width:584.60px;height:1.90px;background:#262b30"></div><div style="left:0.00px;top:198.40px;width:584.60px;height:1.90px;background:#262b30"></div><div style="left:0.00px;top:238.40px;width:584.60px;height:1.90px;background:#262b30"></div><div style="left:0.00px;top:278.40px;width:584.60px;height:1.90px;background:#262b30"></div><div style="left:0.00px;top:318.40px;width:584.60px;height:1.90px;background:#262b30"></div><style>#tc i{position:absolute;display:block}</style><div style="left:199.90px;top:0.50px;width:20.00px;height:38.60px;background:#de7c07;border:1.1px solid rgba(0,0,0,.55);box-shadow:inset 0 0 0 1.15px #f6a64f"></div><div style="left:399.90px;top:0.50px;width:20.00px;height:38.60px;background:#de7c07;border:1.1px solid rgba(0,0,0,.55);box-shadow:inset 0 0 0 1.15px #f6a64f"></div><div style="left:319.90px;top:40.50px;width:40.00px;height:38.60px;background:#20bdb2;border:1.1px solid rgba(0,0,0,.55);box-shadow:inset 0 0 0 1.15px #3fe6da"></div><div style="left:359.90px;top:40.50px;width:40.00px;height:38.60px;background:#20bdb2;border:1.1px solid rgba(0,0,0,.55);box-shadow:inset 0 0 0 1.15px #3fe6da"></div><div style="left:399.90px;top:40.50px;width:40.00px;height:38.60px;background:#20bdb2;border:1.1px solid rgba(0,0,0,.55);box-shadow:inset 0 0 0 1.15px #3fe6da"></div><div style="left:439.90px;top:40.50px;width:40.00px;height:38.60px;background:#20bdb2;border:1.1px solid rgba(0,0,0,.55);box-shadow:inset 0 0 0 1.15px #3fe6da"></div><div style="left:-0.10px;top:80.50px;width:80.00px;height:38.50px;background:#22a04f;border:2.0px solid #4dfb8c;overflow:hidden"><i style="left:17.50px;top:0.80px;width:1.2px;height:4.5px;background:#15502b"></i><i style="left:17.50px;bottom:0.40px;width:1.2px;height:4.6px;background:#15502b"></i><i style="left:37.50px;top:0.80px;width:1.2px;height:4.5px;background:#15502b"></i><i style="left:37.50px;bottom:0.40px;width:1.2px;height:4.6px;background:#15502b"></i><i style="left:57.50px;top:0.80px;width:1.2px;height:4.5px;background:#15502b"></i><i style="left:57.50px;bottom:0.40px;width:1.2px;height:4.6px;background:#15502b"></i><i style="left:18.60px;top:3.10px;width:19.40px;height:2px;background:linear-gradient(#e4f3e8 50%,#7fc99b 50%)"></i><i style="left:18.60px;top:8.10px;width:20.00px;height:2px;background:linear-gradient(#e4f3e8 50%,#7fc99b 50%)"></i><i style="left:38.60px;top:7.10px;width:20.80px;height:2px;background:linear-gradient(#e4f3e8 50%,#7fc99b 50%)"></i><i style="left:0.20px;top:12.10px;width:19.30px;height:2px;background:linear-gradient(#e4f3e8 50%,#7fc99b 50%)"></i><i style="left:39.00px;top:12.10px;width:20.40px;height:2px;background:linear-gradient(#e4f3e8 50%,#7fc99b 50%)"></i><i style="left:0.20px;top:16.10px;width:19.30px;height:2px;background:linear-gradient(#e4f3e8 50%,#7fc99b 50%)"></i><i style="left:19.50px;top:15.10px;width:19.50px;height:2px;background:linear-gradient(#e4f3e8 50%,#7fc99b 50%)"></i><i style="left:39.00px;top:18.10px;width:20.40px;height:2px;background:linear-gradient(#e4f3e8 50%,#7fc99b 50%)"></i><i style="left:58.60px;top:20.10px;width:17.10px;height:2px;background:linear-gradient(#e4f3e8 50%,#7fc99b 50%)"></i><i style="left:0.20px;top:24.10px;width:39.10px;height:2px;background:linear-gradient(#e4f3e8 50%,#7fc99b 50%)"></i><i style="left:58.60px;top:25.10px;width:17.10px;height:2px;background:linear-gradient(#e4f3e8 50%,#7fc99b 50%)"></i><i style="left:58.60px;top:32.10px;width:17.10px;height:2px;background:linear-gradient(#e4f3e8 50%,#7fc99b 50%)"></i></div><div style="left:79.90px;top:80.50px;width:80.00px;height:38.50px;background:#22a04f;border:1.1px solid #133820;box-shadow:inset 0 0 0 1.15px #3fd074;overflow:hidden"><i style="left:18.40px;top:1.70px;width:1.2px;height:4.5px;background:#15502b"></i><i style="left:18.40px;bottom:1.30px;width:1.2px;height:4.6px;background:#15502b"></i><i style="left:38.40px;top:1.70px;width:1.2px;height:4.5px;background:#15502b"></i><i style="left:38.40px;bottom:1.30px;width:1.2px;height:4.6px;background:#15502b"></i><i style="left:58.40px;top:1.70px;width:1.2px;height:4.5px;background:#15502b"></i><i style="left:58.40px;bottom:1.30px;width:1.2px;height:4.6px;background:#15502b"></i><i style="left:19.50px;top:4.00px;width:19.40px;height:2px;background:linear-gradient(#e4f3e8 50%,#7fc99b 50%)"></i><i style="left:19.50px;top:9.00px;width:20.00px;height:2px;background:linear-gradient(#e4f3e8 50%,#7fc99b 50%)"></i><i style="left:39.50px;top:8.00px;width:20.80px;height:2px;background:linear-gradient(#e4f3e8 50%,#7fc99b 50%)"></i><i style="left:1.10px;top:13.00px;width:19.30px;height:2px;background:linear-gradient(#e4f3e8 50%,#7fc99b 50%)"></i><i style="left:39.90px;top:13.00px;width:20.40px;height:2px;background:linear-gradient(#e4f3e8 50%,#7fc99b 50%)"></i><i style="left:1.10px;top:17.00px;width:19.30px;height:2px;background:linear-gradient(#e4f3e8 50%,#7fc99b 50%)"></i><i style="left:20.40px;top:16.00px;width:19.50px;height:2px;background:linear-gradient(#e4f3e8 50%,#7fc99b 50%)"></i><i style="left:39.90px;top:19.00px;width:20.40px;height:2px;background:linear-gradient(#e4f3e8 50%,#7fc99b 50%)"></i><i style="left:59.50px;top:21.00px;width:17.10px;height:2px;background:linear-gradient(#e4f3e8 50%,#7fc99b 50%)"></i><i style="left:1.10px;top:25.00px;width:39.10px;height:2px;background:linear-gradient(#e4f3e8 50%,#7fc99b 50%)"></i><i style="left:59.50px;top:26.00px;width:17.10px;height:2px;background:linear-gradient(#e4f3e8 50%,#7fc99b 50%)"></i><i style="left:59.50px;top:33.00px;width:17.10px;height:2px;background:linear-gradient(#e4f3e8 50%,#7fc99b 50%)"></i></div><div style="left:159.90px;top:80.50px;width:80.00px;height:38.50px;background:#22a04f;border:1.1px solid #133820;box-shadow:inset 0 0 0 1.15px #3fd074;overflow:hidden"><i style="left:18.40px;top:1.70px;width:1.2px;height:4.5px;background:#15502b"></i><i style="left:18.40px;bottom:1.30px;width:1.2px;height:4.6px;background:#15502b"></i><i style="left:38.40px;top:1.70px;width:1.2px;height:4.5px;background:#15502b"></i><i style="left:38.40px;bottom:1.30px;width:1.2px;height:4.6px;background:#15502b"></i><i style="left:58.40px;top:1.70px;width:1.2px;height:4.5px;background:#15502b"></i><i style="left:58.40px;bottom:1.30px;width:1.2px;height:4.6px;background:#15502b"></i><i style="left:19.50px;top:4.00px;width:19.40px;height:2px;background:linear-gradient(#e4f3e8 50%,#7fc99b 50%)"></i><i style="left:19.50px;top:9.00px;width:20.00px;height:2px;background:linear-gradient(#e4f3e8 50%,#7fc99b 50%)"></i><i style="left:39.50px;top:8.00px;width:20.80px;height:2px;background:linear-gradient(#e4f3e8 50%,#7fc99b 50%)"></i><i style="left:1.10px;top:13.00px;width:19.30px;height:2px;background:linear-gradient(#e4f3e8 50%,#7fc99b 50%)"></i><i style="left:39.90px;top:13.00px;width:20.40px;height:2px;background:linear-gradient(#e4f3e8 50%,#7fc99b 50%)"></i><i style="left:1.10px;top:17.00px;width:19.30px;height:2px;background:linear-gradient(#e4f3e8 50%,#7fc99b 50%)"></i><i style="left:20.40px;top:16.00px;width:19.50px;height:2px;background:linear-gradient(#e4f3e8 50%,#7fc99b 50%)"></i><i style="left:39.90px;top:19.00px;width:20.40px;height:2px;background:linear-gradient(#e4f3e8 50%,#7fc99b 50%)"></i><i style="left:59.50px;top:21.00px;width:17.10px;height:2px;background:linear-gradient(#e4f3e8 50%,#7fc99b 50%)"></i><i style="left:1.10px;top:25.00px;width:39.10px;height:2px;background:linear-gradient(#e4f3e8 50%,#7fc99b 50%)"></i><i style="left:59.50px;top:26.00px;width:17.10px;height:2px;background:linear-gradient(#e4f3e8 50%,#7fc99b 50%)"></i><i style="left:59.50px;top:33.00px;width:17.10px;height:2px;background:linear-gradient(#e4f3e8 50%,#7fc99b 50%)"></i></div><div style="left:239.90px;top:80.50px;width:80.00px;height:38.50px;background:#22a04f;border:1.1px solid #133820;box-shadow:inset 0 0 0 1.15px #3fd074;overflow:hidden"><i style="left:18.40px;top:1.70px;width:1.2px;height:4.5px;background:#15502b"></i><i style="left:18.40px;bottom:1.30px;width:1.2px;height:4.6px;background:#15502b"></i><i style="left:38.40px;top:1.70px;width:1.2px;height:4.5px;background:#15502b"></i><i style="left:38.40px;bottom:1.30px;width:1.2px;height:4.6px;background:#15502b"></i><i style="left:58.40px;top:1.70px;width:1.2px;height:4.5px;background:#15502b"></i><i style="left:58.40px;bottom:1.30px;width:1.2px;height:4.6px;background:#15502b"></i><i style="left:19.50px;top:4.00px;width:19.40px;height:2px;background:linear-gradient(#e4f3e8 50%,#7fc99b 50%)"></i><i style="left:19.50px;top:9.00px;width:20.00px;height:2px;background:linear-gradient(#e4f3e8 50%,#7fc99b 50%)"></i><i style="left:39.50px;top:8.00px;width:20.80px;height:2px;background:linear-gradient(#e4f3e8 50%,#7fc99b 50%)"></i><i style="left:1.10px;top:13.00px;width:19.30px;height:2px;background:linear-gradient(#e4f3e8 50%,#7fc99b 50%)"></i><i style="left:39.90px;top:13.00px;width:20.40px;height:2px;background:linear-gradient(#e4f3e8 50%,#7fc99b 50%)"></i><i style="left:1.10px;top:17.00px;width:19.30px;height:2px;background:linear-gradient(#e4f3e8 50%,#7fc99b 50%)"></i><i style="left:20.40px;top:16.00px;width:19.50px;height:2px;background:linear-gradient(#e4f3e8 50%,#7fc99b 50%)"></i><i style="left:39.90px;top:19.00px;width:20.40px;height:2px;background:linear-gradient(#e4f3e8 50%,#7fc99b 50%)"></i><i style="left:59.50px;top:21.00px;width:17.10px;height:2px;background:linear-gradient(#e4f3e8 50%,#7fc99b 50%)"></i><i style="left:1.10px;top:25.00px;width:39.10px;height:2px;background:linear-gradient(#e4f3e8 50%,#7fc99b 50%)"></i><i style="left:59.50px;top:26.00px;width:17.10px;height:2px;background:linear-gradient(#e4f3e8 50%,#7fc99b 50%)"></i><i style="left:59.50px;top:33.00px;width:17.10px;height:2px;background:linear-gradient(#e4f3e8 50%,#7fc99b 50%)"></i></div><div style="left:319.90px;top:80.50px;width:80.00px;height:38.50px;background:#22a04f;border:1.1px solid #133820;box-shadow:inset 0 0 0 1.15px #3fd074;overflow:hidden"><i style="left:18.40px;top:1.70px;width:1.2px;height:4.5px;background:#15502b"></i><i style="left:18.40px;bottom:1.30px;width:1.2px;height:4.6px;background:#15502b"></i><i style="left:38.40px;top:1.70px;width:1.2px;height:4.5px;background:#15502b"></i><i style="left:38.40px;bottom:1.30px;width:1.2px;height:4.6px;background:#15502b"></i><i style="left:58.40px;top:1.70px;width:1.2px;height:4.5px;background:#15502b"></i><i style="left:58.40px;bottom:1.30px;width:1.2px;height:4.6px;background:#15502b"></i><i style="left:19.50px;top:4.00px;width:19.40px;height:2px;background:linear-gradient(#e4f3e8 50%,#7fc99b 50%)"></i><i style="left:19.50px;top:9.00px;width:20.00px;height:2px;background:linear-gradient(#e4f3e8 50%,#7fc99b 50%)"></i><i style="left:39.50px;top:8.00px;width:20.80px;height:2px;background:linear-gradient(#e4f3e8 50%,#7fc99b 50%)"></i><i style="left:1.10px;top:13.00px;width:19.30px;height:2px;background:linear-gradient(#e4f3e8 50%,#7fc99b 50%)"></i><i style="left:39.90px;top:13.00px;width:20.40px;height:2px;background:linear-gradient(#e4f3e8 50%,#7fc99b 50%)"></i><i style="left:1.10px;top:17.00px;width:19.30px;height:2px;background:linear-gradient(#e4f3e8 50%,#7fc99b 50%)"></i><i style="left:20.40px;top:16.00px;width:19.50px;height:2px;background:linear-gradient(#e4f3e8 50%,#7fc99b 50%)"></i><i style="left:39.90px;top:19.00px;width:20.40px;height:2px;background:linear-gradient(#e4f3e8 50%,#7fc99b 50%)"></i><i style="left:59.50px;top:21.00px;width:17.10px;height:2px;background:linear-gradient(#e4f3e8 50%,#7fc99b 50%)"></i><i style="left:1.10px;top:25.00px;width:39.10px;height:2px;background:linear-gradient(#e4f3e8 50%,#7fc99b 50%)"></i><i style="left:59.50px;top:26.00px;width:17.10px;height:2px;background:linear-gradient(#e4f3e8 50%,#7fc99b 50%)"></i><i style="left:59.50px;top:33.00px;width:17.10px;height:2px;background:linear-gradient(#e4f3e8 50%,#7fc99b 50%)"></i></div><div style="left:399.90px;top:80.50px;width:80.00px;height:38.50px;background:#22a04f;border:1.1px solid #133820;box-shadow:inset 0 0 0 1.15px #3fd074;overflow:hidden"><i style="left:18.40px;top:1.70px;width:1.2px;height:4.5px;background:#15502b"></i><i style="left:18.40px;bottom:1.30px;width:1.2px;height:4.6px;background:#15502b"></i><i style="left:38.40px;top:1.70px;width:1.2px;height:4.5px;background:#15502b"></i><i style="left:38.40px;bottom:1.30px;width:1.2px;height:4.6px;background:#15502b"></i><i style="left:58.40px;top:1.70px;width:1.2px;height:4.5px;background:#15502b"></i><i style="left:58.40px;bottom:1.30px;width:1.2px;height:4.6px;background:#15502b"></i><i style="left:19.50px;top:4.00px;width:19.40px;height:2px;background:linear-gradient(#e4f3e8 50%,#7fc99b 50%)"></i><i style="left:19.50px;top:9.00px;width:20.00px;height:2px;background:linear-gradient(#e4f3e8 50%,#7fc99b 50%)"></i><i style="left:39.50px;top:8.00px;width:20.80px;height:2px;background:linear-gradient(#e4f3e8 50%,#7fc99b 50%)"></i><i style="left:1.10px;top:13.00px;width:19.30px;height:2px;background:linear-gradient(#e4f3e8 50%,#7fc99b 50%)"></i><i style="left:39.90px;top:13.00px;width:20.40px;height:2px;background:linear-gradient(#e4f3e8 50%,#7fc99b 50%)"></i><i style="left:1.10px;top:17.00px;width:19.30px;height:2px;background:linear-gradient(#e4f3e8 50%,#7fc99b 50%)"></i><i style="left:20.40px;top:16.00px;width:19.50px;height:2px;background:linear-gradient(#e4f3e8 50%,#7fc99b 50%)"></i><i style="left:39.90px;top:19.00px;width:20.40px;height:2px;background:linear-gradient(#e4f3e8 50%,#7fc99b 50%)"></i><i style="left:59.50px;top:21.00px;width:17.10px;height:2px;background:linear-gradient(#e4f3e8 50%,#7fc99b 50%)"></i><i style="left:1.10px;top:25.00px;width:39.10px;height:2px;background:linear-gradient(#e4f3e8 50%,#7fc99b 50%)"></i><i style="left:59.50px;top:26.00px;width:17.10px;height:2px;background:linear-gradient(#e4f3e8 50%,#7fc99b 50%)"></i><i style="left:59.50px;top:33.00px;width:17.10px;height:2px;background:linear-gradient(#e4f3e8 50%,#7fc99b 50%)"></i></div><div style="left:479.90px;top:80.50px;width:80.00px;height:38.50px;background:#22a04f;border:1.1px solid #133820;box-shadow:inset 0 0 0 1.15px #3fd074;overflow:hidden"><i style="left:18.40px;top:1.70px;width:1.2px;height:4.5px;background:#15502b"></i><i style="left:18.40px;bottom:1.30px;width:1.2px;height:4.6px;background:#15502b"></i><i style="left:38.40px;top:1.70px;width:1.2px;height:4.5px;background:#15502b"></i><i style="left:38.40px;bottom:1.30px;width:1.2px;height:4.6px;background:#15502b"></i><i style="left:58.40px;top:1.70px;width:1.2px;height:4.5px;background:#15502b"></i><i style="left:58.40px;bottom:1.30px;width:1.2px;height:4.6px;background:#15502b"></i><i style="left:19.50px;top:4.00px;width:19.40px;height:2px;background:linear-gradient(#e4f3e8 50%,#7fc99b 50%)"></i><i style="left:19.50px;top:9.00px;width:20.00px;height:2px;background:linear-gradient(#e4f3e8 50%,#7fc99b 50%)"></i><i style="left:39.50px;top:8.00px;width:20.80px;height:2px;background:linear-gradient(#e4f3e8 50%,#7fc99b 50%)"></i><i style="left:1.10px;top:13.00px;width:19.30px;height:2px;background:linear-gradient(#e4f3e8 50%,#7fc99b 50%)"></i><i style="left:39.90px;top:13.00px;width:20.40px;height:2px;background:linear-gradient(#e4f3e8 50%,#7fc99b 50%)"></i><i style="left:1.10px;top:17.00px;width:19.30px;height:2px;background:linear-gradient(#e4f3e8 50%,#7fc99b 50%)"></i><i style="left:20.40px;top:16.00px;width:19.50px;height:2px;background:linear-gradient(#e4f3e8 50%,#7fc99b 50%)"></i><i style="left:39.90px;top:19.00px;width:20.40px;height:2px;background:linear-gradient(#e4f3e8 50%,#7fc99b 50%)"></i><i style="left:59.50px;top:21.00px;width:17.10px;height:2px;background:linear-gradient(#e4f3e8 50%,#7fc99b 50%)"></i><i style="left:1.10px;top:25.00px;width:39.10px;height:2px;background:linear-gradient(#e4f3e8 50%,#7fc99b 50%)"></i><i style="left:59.50px;top:26.00px;width:17.10px;height:2px;background:linear-gradient(#e4f3e8 50%,#7fc99b 50%)"></i><i style="left:59.50px;top:33.00px;width:17.10px;height:2px;background:linear-gradient(#e4f3e8 50%,#7fc99b 50%)"></i></div><div style="left:559.90px;top:80.50px;width:20.00px;height:38.60px;background:#3a3f4b;border:1.1px solid #16181b;box-shadow:inset 0 0 0 1.1px #525867"></div><div style="left:159.90px;top:120.50px;width:20.00px;height:38.60px;background:#3a3f4b;border:1.1px solid #16181b;box-shadow:inset 0 0 0 1.1px #525867"></div><div style="left:239.90px;top:120.50px;width:80.00px;height:38.50px;background:#22a04f;border:1.1px solid #133820;box-shadow:inset 0 0 0 1.15px #3fd074;overflow:hidden"><i style="left:18.40px;top:1.70px;width:1.2px;height:4.5px;background:#15502b"></i><i style="left:18.40px;bottom:1.30px;width:1.2px;height:4.6px;background:#15502b"></i><i style="left:38.40px;top:1.70px;width:1.2px;height:4.5px;background:#15502b"></i><i style="left:38.40px;bottom:1.30px;width:1.2px;height:4.6px;background:#15502b"></i><i style="left:58.40px;top:1.70px;width:1.2px;height:4.5px;background:#15502b"></i><i style="left:58.40px;bottom:1.30px;width:1.2px;height:4.6px;background:#15502b"></i><i style="left:18.90px;top:4.00px;width:6.00px;height:2px;background:linear-gradient(#e4f3e8 50%,#7fc99b 50%)"></i><i style="left:28.90px;top:4.00px;width:4.00px;height:2px;background:linear-gradient(#e4f3e8 50%,#7fc99b 50%)"></i><i style="left:34.30px;top:4.00px;width:3.80px;height:2px;background:linear-gradient(#e4f3e8 50%,#7fc99b 50%)"></i><i style="left:38.90px;top:6.00px;width:11.00px;height:2px;background:linear-gradient(#e4f3e8 50%,#7fc99b 50%)"></i><i style="left:1.10px;top:11.00px;width:8.80px;height:2px;background:linear-gradient(#e4f3e8 50%,#7fc99b 50%)"></i><i style="left:58.90px;top:15.00px;width:6.00px;height:2px;background:linear-gradient(#e4f3e8 50%,#7fc99b 50%)"></i><i style="left:68.90px;top:15.00px;width:4.00px;height:2px;background:linear-gradient(#e4f3e8 50%,#7fc99b 50%)"></i><i style="left:73.90px;top:15.00px;width:2.70px;height:2px;background:linear-gradient(#e4f3e8 50%,#7fc99b 50%)"></i><i style="left:23.90px;top:22.00px;width:6.00px;height:2px;background:linear-gradient(#e4f3e8 50%,#7fc99b 50%)"></i><i style="left:31.40px;top:22.00px;width:3.50px;height:2px;background:linear-gradient(#e4f3e8 50%,#7fc99b 50%)"></i><i style="left:36.20px;top:22.00px;width:3.70px;height:2px;background:linear-gradient(#e4f3e8 50%,#7fc99b 50%)"></i><i style="left:48.90px;top:25.00px;width:11.00px;height:2px;background:linear-gradient(#e4f3e8 50%,#7fc99b 50%)"></i><i style="left:8.90px;top:30.00px;width:11.00px;height:2px;background:linear-gradient(#e4f3e8 50%,#7fc99b 50%)"></i><i style="left:63.90px;top:34.00px;width:6.00px;height:2px;background:linear-gradient(#e4f3e8 50%,#7fc99b 50%)"></i><i style="left:71.60px;top:34.00px;width:3.30px;height:2px;background:linear-gradient(#e4f3e8 50%,#7fc99b 50%)"></i></div><div style="left:319.90px;top:120.50px;width:80.00px;height:38.50px;background:#22a04f;border:1.1px solid #133820;box-shadow:inset 0 0 0 1.15px #3fd074;overflow:hidden"><i style="left:18.40px;top:1.70px;width:1.2px;height:4.5px;background:#15502b"></i><i style="left:18.40px;bottom:1.30px;width:1.2px;height:4.6px;background:#15502b"></i><i style="left:38.40px;top:1.70px;width:1.2px;height:4.5px;background:#15502b"></i><i style="left:38.40px;bottom:1.30px;width:1.2px;height:4.6px;background:#15502b"></i><i style="left:58.40px;top:1.70px;width:1.2px;height:4.5px;background:#15502b"></i><i style="left:58.40px;bottom:1.30px;width:1.2px;height:4.6px;background:#15502b"></i><i style="left:18.90px;top:4.00px;width:6.00px;height:2px;background:linear-gradient(#e4f3e8 50%,#7fc99b 50%)"></i><i style="left:28.90px;top:4.00px;width:4.00px;height:2px;background:linear-gradient(#e4f3e8 50%,#7fc99b 50%)"></i><i style="left:34.30px;top:4.00px;width:3.80px;height:2px;background:linear-gradient(#e4f3e8 50%,#7fc99b 50%)"></i><i style="left:38.90px;top:6.00px;width:11.00px;height:2px;background:linear-gradient(#e4f3e8 50%,#7fc99b 50%)"></i><i style="left:1.10px;top:11.00px;width:8.80px;height:2px;background:linear-gradient(#e4f3e8 50%,#7fc99b 50%)"></i><i style="left:58.90px;top:15.00px;width:6.00px;height:2px;background:linear-gradient(#e4f3e8 50%,#7fc99b 50%)"></i><i style="left:68.90px;top:15.00px;width:4.00px;height:2px;background:linear-gradient(#e4f3e8 50%,#7fc99b 50%)"></i><i style="left:73.90px;top:15.00px;width:2.70px;height:2px;background:linear-gradient(#e4f3e8 50%,#7fc99b 50%)"></i><i style="left:23.90px;top:22.00px;width:6.00px;height:2px;background:linear-gradient(#e4f3e8 50%,#7fc99b 50%)"></i><i style="left:31.40px;top:22.00px;width:3.50px;height:2px;background:linear-gradient(#e4f3e8 50%,#7fc99b 50%)"></i><i style="left:36.20px;top:22.00px;width:3.70px;height:2px;background:linear-gradient(#e4f3e8 50%,#7fc99b 50%)"></i><i style="left:48.90px;top:25.00px;width:11.00px;height:2px;background:linear-gradient(#e4f3e8 50%,#7fc99b 50%)"></i><i style="left:8.90px;top:30.00px;width:11.00px;height:2px;background:linear-gradient(#e4f3e8 50%,#7fc99b 50%)"></i><i style="left:63.90px;top:34.00px;width:6.00px;height:2px;background:linear-gradient(#e4f3e8 50%,#7fc99b 50%)"></i><i style="left:71.60px;top:34.00px;width:3.30px;height:2px;background:linear-gradient(#e4f3e8 50%,#7fc99b 50%)"></i></div><div style="left:399.90px;top:120.50px;width:80.00px;height:38.50px;background:#22a04f;border:1.1px solid #133820;box-shadow:inset 0 0 0 1.15px #3fd074;overflow:hidden"><i style="left:18.40px;top:1.70px;width:1.2px;height:4.5px;background:#15502b"></i><i style="left:18.40px;bottom:1.30px;width:1.2px;height:4.6px;background:#15502b"></i><i style="left:38.40px;top:1.70px;width:1.2px;height:4.5px;background:#15502b"></i><i style="left:38.40px;bottom:1.30px;width:1.2px;height:4.6px;background:#15502b"></i><i style="left:58.40px;top:1.70px;width:1.2px;height:4.5px;background:#15502b"></i><i style="left:58.40px;bottom:1.30px;width:1.2px;height:4.6px;background:#15502b"></i><i style="left:18.90px;top:4.00px;width:6.00px;height:2px;background:linear-gradient(#e4f3e8 50%,#7fc99b 50%)"></i><i style="left:28.90px;top:4.00px;width:4.00px;height:2px;background:linear-gradient(#e4f3e8 50%,#7fc99b 50%)"></i><i style="left:34.30px;top:4.00px;width:3.80px;height:2px;background:linear-gradient(#e4f3e8 50%,#7fc99b 50%)"></i><i style="left:38.90px;top:6.00px;width:11.00px;height:2px;background:linear-gradient(#e4f3e8 50%,#7fc99b 50%)"></i><i style="left:1.10px;top:11.00px;width:8.80px;height:2px;background:linear-gradient(#e4f3e8 50%,#7fc99b 50%)"></i><i style="left:58.90px;top:15.00px;width:6.00px;height:2px;background:linear-gradient(#e4f3e8 50%,#7fc99b 50%)"></i><i style="left:68.90px;top:15.00px;width:4.00px;height:2px;background:linear-gradient(#e4f3e8 50%,#7fc99b 50%)"></i><i style="left:73.90px;top:15.00px;width:2.70px;height:2px;background:linear-gradient(#e4f3e8 50%,#7fc99b 50%)"></i><i style="left:23.90px;top:22.00px;width:6.00px;height:2px;background:linear-gradient(#e4f3e8 50%,#7fc99b 50%)"></i><i style="left:31.40px;top:22.00px;width:3.50px;height:2px;background:linear-gradient(#e4f3e8 50%,#7fc99b 50%)"></i><i style="left:36.20px;top:22.00px;width:3.70px;height:2px;background:linear-gradient(#e4f3e8 50%,#7fc99b 50%)"></i><i style="left:48.90px;top:25.00px;width:11.00px;height:2px;background:linear-gradient(#e4f3e8 50%,#7fc99b 50%)"></i><i style="left:8.90px;top:30.00px;width:11.00px;height:2px;background:linear-gradient(#e4f3e8 50%,#7fc99b 50%)"></i><i style="left:63.90px;top:34.00px;width:6.00px;height:2px;background:linear-gradient(#e4f3e8 50%,#7fc99b 50%)"></i><i style="left:71.60px;top:34.00px;width:3.30px;height:2px;background:linear-gradient(#e4f3e8 50%,#7fc99b 50%)"></i></div><div style="left:479.90px;top:120.50px;width:80.00px;height:38.50px;background:#22a04f;border:1.1px solid #133820;box-shadow:inset 0 0 0 1.15px #3fd074;overflow:hidden"><i style="left:18.40px;top:1.70px;width:1.2px;height:4.5px;background:#15502b"></i><i style="left:18.40px;bottom:1.30px;width:1.2px;height:4.6px;background:#15502b"></i><i style="left:38.40px;top:1.70px;width:1.2px;height:4.5px;background:#15502b"></i><i style="left:38.40px;bottom:1.30px;width:1.2px;height:4.6px;background:#15502b"></i><i style="left:58.40px;top:1.70px;width:1.2px;height:4.5px;background:#15502b"></i><i style="left:58.40px;bottom:1.30px;width:1.2px;height:4.6px;background:#15502b"></i><i style="left:18.90px;top:4.00px;width:6.00px;height:2px;background:linear-gradient(#e4f3e8 50%,#7fc99b 50%)"></i><i style="left:28.90px;top:4.00px;width:4.00px;height:2px;background:linear-gradient(#e4f3e8 50%,#7fc99b 50%)"></i><i style="left:34.30px;top:4.00px;width:3.80px;height:2px;background:linear-gradient(#e4f3e8 50%,#7fc99b 50%)"></i><i style="left:38.90px;top:6.00px;width:11.00px;height:2px;background:linear-gradient(#e4f3e8 50%,#7fc99b 50%)"></i><i style="left:1.10px;top:11.00px;width:8.80px;height:2px;background:linear-gradient(#e4f3e8 50%,#7fc99b 50%)"></i><i style="left:58.90px;top:15.00px;width:6.00px;height:2px;background:linear-gradient(#e4f3e8 50%,#7fc99b 50%)"></i><i style="left:68.90px;top:15.00px;width:4.00px;height:2px;background:linear-gradient(#e4f3e8 50%,#7fc99b 50%)"></i><i style="left:73.90px;top:15.00px;width:2.70px;height:2px;background:linear-gradient(#e4f3e8 50%,#7fc99b 50%)"></i><i style="left:23.90px;top:22.00px;width:6.00px;height:2px;background:linear-gradient(#e4f3e8 50%,#7fc99b 50%)"></i><i style="left:31.40px;top:22.00px;width:3.50px;height:2px;background:linear-gradient(#e4f3e8 50%,#7fc99b 50%)"></i><i style="left:36.20px;top:22.00px;width:3.70px;height:2px;background:linear-gradient(#e4f3e8 50%,#7fc99b 50%)"></i><i style="left:48.90px;top:25.00px;width:11.00px;height:2px;background:linear-gradient(#e4f3e8 50%,#7fc99b 50%)"></i><i style="left:8.90px;top:30.00px;width:11.00px;height:2px;background:linear-gradient(#e4f3e8 50%,#7fc99b 50%)"></i><i style="left:63.90px;top:34.00px;width:6.00px;height:2px;background:linear-gradient(#e4f3e8 50%,#7fc99b 50%)"></i><i style="left:71.60px;top:34.00px;width:3.30px;height:2px;background:linear-gradient(#e4f3e8 50%,#7fc99b 50%)"></i></div><div style="left:79.90px;top:160.50px;width:20.00px;height:38.60px;background:#3a3f4b;border:1.1px solid #16181b;box-shadow:inset 0 0 0 1.1px #525867"></div><div style="left:159.90px;top:160.50px;width:20.00px;height:38.50px;background:#22a04f;border:1.1px solid #133820;box-shadow:inset 0 0 0 1.15px #3fd074;overflow:hidden"><i style="left:1.10px;top:8.00px;width:15.50px;height:2px;background:linear-gradient(#e4f3e8 50%,#7fc99b 50%)"></i><i style="left:1.10px;top:12.00px;width:15.50px;height:2px;background:linear-gradient(#e4f3e8 50%,#7fc99b 50%)"></i><i style="left:1.10px;top:18.00px;width:15.50px;height:2px;background:linear-gradient(#e4f3e8 50%,#7fc99b 50%)"></i><i style="left:1.10px;top:25.00px;width:15.50px;height:2px;background:linear-gradient(#e4f3e8 50%,#7fc99b 50%)"></i></div><div style="left:179.90px;top:160.50px;width:20.00px;height:38.60px;background:#3a3f4b;border:1.1px solid #16181b;box-shadow:inset 0 0 0 1.1px #525867"></div><div style="left:199.90px;top:160.50px;width:40.00px;height:38.50px;background:#22a04f;border:1.1px solid #133820;box-shadow:inset 0 0 0 1.15px #3fd074;overflow:hidden"><i style="left:18.40px;top:1.70px;width:1.2px;height:4.5px;background:#15502b"></i><i style="left:18.40px;bottom:1.30px;width:1.2px;height:4.6px;background:#15502b"></i><i style="left:1.10px;top:8.00px;width:18.80px;height:2px;background:linear-gradient(#e4f3e8 50%,#7fc99b 50%)"></i><i style="left:1.10px;top:13.00px;width:18.80px;height:2px;background:linear-gradient(#e4f3e8 50%,#7fc99b 50%)"></i><i style="left:1.10px;top:19.00px;width:18.80px;height:2px;background:linear-gradient(#e4f3e8 50%,#7fc99b 50%)"></i><i style="left:19.50px;top:22.00px;width:17.10px;height:2px;background:linear-gradient(#e4f3e8 50%,#7fc99b 50%)"></i><i style="left:19.50px;top:26.00px;width:17.10px;height:2px;background:linear-gradient(#e4f3e8 50%,#7fc99b 50%)"></i><i style="left:19.50px;top:34.00px;width:17.10px;height:2px;background:linear-gradient(#e4f3e8 50%,#7fc99b 50%)"></i></div><div style="left:239.90px;top:160.50px;width:80.00px;height:38.50px;background:#22a04f;border:1.1px solid #133820;box-shadow:inset 0 0 0 1.15px #3fd074;overflow:hidden"><i style="left:18.40px;top:1.70px;width:1.2px;height:4.5px;background:#15502b"></i><i style="left:18.40px;bottom:1.30px;width:1.2px;height:4.6px;background:#15502b"></i><i style="left:38.40px;top:1.70px;width:1.2px;height:4.5px;background:#15502b"></i><i style="left:38.40px;bottom:1.30px;width:1.2px;height:4.6px;background:#15502b"></i><i style="left:58.40px;top:1.70px;width:1.2px;height:4.5px;background:#15502b"></i><i style="left:58.40px;bottom:1.30px;width:1.2px;height:4.6px;background:#15502b"></i><i style="left:19.50px;top:4.00px;width:19.40px;height:2px;background:linear-gradient(#e4f3e8 50%,#7fc99b 50%)"></i><i style="left:19.50px;top:9.00px;width:20.00px;height:2px;background:linear-gradient(#e4f3e8 50%,#7fc99b 50%)"></i><i style="left:39.50px;top:8.00px;width:20.80px;height:2px;background:linear-gradient(#e4f3e8 50%,#7fc99b 50%)"></i><i style="left:1.10px;top:13.00px;width:19.30px;height:2px;background:linear-gradient(#e4f3e8 50%,#7fc99b 50%)"></i><i style="left:39.90px;top:13.00px;width:20.40px;height:2px;background:linear-gradient(#e4f3e8 50%,#7fc99b 50%)"></i><i style="left:1.10px;top:17.00px;width:19.30px;height:2px;background:linear-gradient(#e4f3e8 50%,#7fc99b 50%)"></i><i style="left:20.40px;top:16.00px;width:19.50px;height:2px;background:linear-gradient(#e4f3e8 50%,#7fc99b 50%)"></i><i style="left:39.90px;top:19.00px;width:20.40px;height:2px;background:linear-gradient(#e4f3e8 50%,#7fc99b 50%)"></i><i style="left:59.50px;top:21.00px;width:17.10px;height:2px;background:linear-gradient(#e4f3e8 50%,#7fc99b 50%)"></i><i style="left:1.10px;top:25.00px;width:39.10px;height:2px;background:linear-gradient(#e4f3e8 50%,#7fc99b 50%)"></i><i style="left:59.50px;top:26.00px;width:17.10px;height:2px;background:linear-gradient(#e4f3e8 50%,#7fc99b 50%)"></i><i style="left:59.50px;top:33.00px;width:17.10px;height:2px;background:linear-gradient(#e4f3e8 50%,#7fc99b 50%)"></i></div><div style="left:319.90px;top:160.50px;width:80.00px;height:38.50px;background:#22a04f;border:1.1px solid #133820;box-shadow:inset 0 0 0 1.15px #3fd074;overflow:hidden"><i style="left:18.40px;top:1.70px;width:1.2px;height:4.5px;background:#15502b"></i><i style="left:18.40px;bottom:1.30px;width:1.2px;height:4.6px;background:#15502b"></i><i style="left:38.40px;top:1.70px;width:1.2px;height:4.5px;background:#15502b"></i><i style="left:38.40px;bottom:1.30px;width:1.2px;height:4.6px;background:#15502b"></i><i style="left:58.40px;top:1.70px;width:1.2px;height:4.5px;background:#15502b"></i><i style="left:58.40px;bottom:1.30px;width:1.2px;height:4.6px;background:#15502b"></i><i style="left:19.50px;top:4.00px;width:19.40px;height:2px;background:linear-gradient(#e4f3e8 50%,#7fc99b 50%)"></i><i style="left:19.50px;top:9.00px;width:20.00px;height:2px;background:linear-gradient(#e4f3e8 50%,#7fc99b 50%)"></i><i style="left:39.50px;top:8.00px;width:20.80px;height:2px;background:linear-gradient(#e4f3e8 50%,#7fc99b 50%)"></i><i style="left:1.10px;top:13.00px;width:19.30px;height:2px;background:linear-gradient(#e4f3e8 50%,#7fc99b 50%)"></i><i style="left:39.90px;top:13.00px;width:20.40px;height:2px;background:linear-gradient(#e4f3e8 50%,#7fc99b 50%)"></i><i style="left:1.10px;top:17.00px;width:19.30px;height:2px;background:linear-gradient(#e4f3e8 50%,#7fc99b 50%)"></i><i style="left:20.40px;top:16.00px;width:19.50px;height:2px;background:linear-gradient(#e4f3e8 50%,#7fc99b 50%)"></i><i style="left:39.90px;top:19.00px;width:20.40px;height:2px;background:linear-gradient(#e4f3e8 50%,#7fc99b 50%)"></i><i style="left:59.50px;top:21.00px;width:17.10px;height:2px;background:linear-gradient(#e4f3e8 50%,#7fc99b 50%)"></i><i style="left:1.10px;top:25.00px;width:39.10px;height:2px;background:linear-gradient(#e4f3e8 50%,#7fc99b 50%)"></i><i style="left:59.50px;top:26.00px;width:17.10px;height:2px;background:linear-gradient(#e4f3e8 50%,#7fc99b 50%)"></i><i style="left:59.50px;top:33.00px;width:17.10px;height:2px;background:linear-gradient(#e4f3e8 50%,#7fc99b 50%)"></i></div><div style="left:399.90px;top:160.50px;width:80.00px;height:38.50px;background:#22a04f;border:1.1px solid #133820;box-shadow:inset 0 0 0 1.15px #3fd074;overflow:hidden"><i style="left:18.40px;top:1.70px;width:1.2px;height:4.5px;background:#15502b"></i><i style="left:18.40px;bottom:1.30px;width:1.2px;height:4.6px;background:#15502b"></i><i style="left:38.40px;top:1.70px;width:1.2px;height:4.5px;background:#15502b"></i><i style="left:38.40px;bottom:1.30px;width:1.2px;height:4.6px;background:#15502b"></i><i style="left:58.40px;top:1.70px;width:1.2px;height:4.5px;background:#15502b"></i><i style="left:58.40px;bottom:1.30px;width:1.2px;height:4.6px;background:#15502b"></i><i style="left:19.50px;top:4.00px;width:19.40px;height:2px;background:linear-gradient(#e4f3e8 50%,#7fc99b 50%)"></i><i style="left:19.50px;top:9.00px;width:20.00px;height:2px;background:linear-gradient(#e4f3e8 50%,#7fc99b 50%)"></i><i style="left:39.50px;top:8.00px;width:20.80px;height:2px;background:linear-gradient(#e4f3e8 50%,#7fc99b 50%)"></i><i style="left:1.10px;top:13.00px;width:19.30px;height:2px;background:linear-gradient(#e4f3e8 50%,#7fc99b 50%)"></i><i style="left:39.90px;top:13.00px;width:20.40px;height:2px;background:linear-gradient(#e4f3e8 50%,#7fc99b 50%)"></i><i style="left:1.10px;top:17.00px;width:19.30px;height:2px;background:linear-gradient(#e4f3e8 50%,#7fc99b 50%)"></i><i style="left:20.40px;top:16.00px;width:19.50px;height:2px;background:linear-gradient(#e4f3e8 50%,#7fc99b 50%)"></i><i style="left:39.90px;top:19.00px;width:20.40px;height:2px;background:linear-gradient(#e4f3e8 50%,#7fc99b 50%)"></i><i style="left:59.50px;top:21.00px;width:17.10px;height:2px;background:linear-gradient(#e4f3e8 50%,#7fc99b 50%)"></i><i style="left:1.10px;top:25.00px;width:39.10px;height:2px;background:linear-gradient(#e4f3e8 50%,#7fc99b 50%)"></i><i style="left:59.50px;top:26.00px;width:17.10px;height:2px;background:linear-gradient(#e4f3e8 50%,#7fc99b 50%)"></i><i style="left:59.50px;top:33.00px;width:17.10px;height:2px;background:linear-gradient(#e4f3e8 50%,#7fc99b 50%)"></i></div><div style="left:479.90px;top:160.50px;width:80.00px;height:38.50px;background:#22a04f;border:1.1px solid #133820;box-shadow:inset 0 0 0 1.15px #3fd074;overflow:hidden"><i style="left:18.40px;top:1.70px;width:1.2px;height:4.5px;background:#15502b"></i><i style="left:18.40px;bottom:1.30px;width:1.2px;height:4.6px;background:#15502b"></i><i style="left:38.40px;top:1.70px;width:1.2px;height:4.5px;background:#15502b"></i><i style="left:38.40px;bottom:1.30px;width:1.2px;height:4.6px;background:#15502b"></i><i style="left:58.40px;top:1.70px;width:1.2px;height:4.5px;background:#15502b"></i><i style="left:58.40px;bottom:1.30px;width:1.2px;height:4.6px;background:#15502b"></i><i style="left:19.50px;top:4.00px;width:19.40px;height:2px;background:linear-gradient(#e4f3e8 50%,#7fc99b 50%)"></i><i style="left:19.50px;top:9.00px;width:20.00px;height:2px;background:linear-gradient(#e4f3e8 50%,#7fc99b 50%)"></i><i style="left:39.50px;top:8.00px;width:20.80px;height:2px;background:linear-gradient(#e4f3e8 50%,#7fc99b 50%)"></i><i style="left:1.10px;top:13.00px;width:19.30px;height:2px;background:linear-gradient(#e4f3e8 50%,#7fc99b 50%)"></i><i style="left:39.90px;top:13.00px;width:20.40px;height:2px;background:linear-gradient(#e4f3e8 50%,#7fc99b 50%)"></i><i style="left:1.10px;top:17.00px;width:19.30px;height:2px;background:linear-gradient(#e4f3e8 50%,#7fc99b 50%)"></i><i style="left:20.40px;top:16.00px;width:19.50px;height:2px;background:linear-gradient(#e4f3e8 50%,#7fc99b 50%)"></i><i style="left:39.90px;top:19.00px;width:20.40px;height:2px;background:linear-gradient(#e4f3e8 50%,#7fc99b 50%)"></i><i style="left:59.50px;top:21.00px;width:17.10px;height:2px;background:linear-gradient(#e4f3e8 50%,#7fc99b 50%)"></i><i style="left:1.10px;top:25.00px;width:39.10px;height:2px;background:linear-gradient(#e4f3e8 50%,#7fc99b 50%)"></i><i style="left:59.50px;top:26.00px;width:17.10px;height:2px;background:linear-gradient(#e4f3e8 50%,#7fc99b 50%)"></i><i style="left:59.50px;top:33.00px;width:17.10px;height:2px;background:linear-gradient(#e4f3e8 50%,#7fc99b 50%)"></i></div><div style="left:559.90px;top:160.50px;width:80.00px;height:38.50px;background:#22a04f;border:1.1px solid #133820;box-shadow:inset 0 0 0 1.15px #3fd074;overflow:hidden"><i style="left:18.40px;top:1.70px;width:1.2px;height:4.5px;background:#15502b"></i><i style="left:18.40px;bottom:1.30px;width:1.2px;height:4.6px;background:#15502b"></i><i style="left:38.40px;top:1.70px;width:1.2px;height:4.5px;background:#15502b"></i><i style="left:38.40px;bottom:1.30px;width:1.2px;height:4.6px;background:#15502b"></i><i style="left:58.40px;top:1.70px;width:1.2px;height:4.5px;background:#15502b"></i><i style="left:58.40px;bottom:1.30px;width:1.2px;height:4.6px;background:#15502b"></i><i style="left:19.50px;top:4.00px;width:19.40px;height:2px;background:linear-gradient(#e4f3e8 50%,#7fc99b 50%)"></i><i style="left:19.50px;top:9.00px;width:20.00px;height:2px;background:linear-gradient(#e4f3e8 50%,#7fc99b 50%)"></i><i style="left:39.50px;top:8.00px;width:20.80px;height:2px;background:linear-gradient(#e4f3e8 50%,#7fc99b 50%)"></i><i style="left:1.10px;top:13.00px;width:19.30px;height:2px;background:linear-gradient(#e4f3e8 50%,#7fc99b 50%)"></i><i style="left:39.90px;top:13.00px;width:20.40px;height:2px;background:linear-gradient(#e4f3e8 50%,#7fc99b 50%)"></i><i style="left:1.10px;top:17.00px;width:19.30px;height:2px;background:linear-gradient(#e4f3e8 50%,#7fc99b 50%)"></i><i style="left:20.40px;top:16.00px;width:19.50px;height:2px;background:linear-gradient(#e4f3e8 50%,#7fc99b 50%)"></i><i style="left:39.90px;top:19.00px;width:20.40px;height:2px;background:linear-gradient(#e4f3e8 50%,#7fc99b 50%)"></i><i style="left:59.50px;top:21.00px;width:17.10px;height:2px;background:linear-gradient(#e4f3e8 50%,#7fc99b 50%)"></i><i style="left:1.10px;top:25.00px;width:39.10px;height:2px;background:linear-gradient(#e4f3e8 50%,#7fc99b 50%)"></i><i style="left:59.50px;top:26.00px;width:17.10px;height:2px;background:linear-gradient(#e4f3e8 50%,#7fc99b 50%)"></i><i style="left:59.50px;top:33.00px;width:17.10px;height:2px;background:linear-gradient(#e4f3e8 50%,#7fc99b 50%)"></i></div><div style="left:119.90px;top:200.50px;width:20.00px;height:38.60px;background:#3a3f4b;border:1.1px solid #16181b;box-shadow:inset 0 0 0 1.1px #525867"></div><div style="left:399.90px;top:200.50px;width:80.00px;height:38.50px;background:#22a04f;border:1.1px solid #133820;box-shadow:inset 0 0 0 1.15px #3fd074;overflow:hidden"><i style="left:18.40px;top:1.70px;width:1.2px;height:4.5px;background:#15502b"></i><i style="left:18.40px;bottom:1.30px;width:1.2px;height:4.6px;background:#15502b"></i><i style="left:38.40px;top:1.70px;width:1.2px;height:4.5px;background:#15502b"></i><i style="left:38.40px;bottom:1.30px;width:1.2px;height:4.6px;background:#15502b"></i><i style="left:58.40px;top:1.70px;width:1.2px;height:4.5px;background:#15502b"></i><i style="left:58.40px;bottom:1.30px;width:1.2px;height:4.6px;background:#15502b"></i><i style="left:38.90px;top:6.00px;width:15.00px;height:2px;background:linear-gradient(#e4f3e8 50%,#7fc99b 50%)"></i><i style="left:53.90px;top:8.00px;width:4.00px;height:2px;background:linear-gradient(#e4f3e8 50%,#7fc99b 50%)"></i><i style="left:13.60px;top:12.00px;width:16.30px;height:2px;background:linear-gradient(#e4f3e8 50%,#7fc99b 50%)"></i><i style="left:55.90px;top:12.00px;width:4.00px;height:2px;background:linear-gradient(#e4f3e8 50%,#7fc99b 50%)"></i><i style="left:73.90px;top:12.00px;width:2.70px;height:2px;background:linear-gradient(#e4f3e8 50%,#7fc99b 50%)"></i><i style="left:1.10px;top:17.00px;width:13.80px;height:2px;background:linear-gradient(#e4f3e8 50%,#7fc99b 50%)"></i><i style="left:58.90px;top:15.00px;width:15.80px;height:2px;background:linear-gradient(#e4f3e8 50%,#7fc99b 50%)"></i><i style="left:28.90px;top:24.00px;width:6.00px;height:2px;background:linear-gradient(#e4f3e8 50%,#7fc99b 50%)"></i><i style="left:33.90px;top:33.00px;width:5.80px;height:2px;background:linear-gradient(#e4f3e8 50%,#7fc99b 50%)"></i></div><div style="left:479.90px;top:200.50px;width:80.00px;height:38.50px;background:#22a04f;border:1.1px solid #133820;box-shadow:inset 0 0 0 1.15px #3fd074;overflow:hidden"><i style="left:18.40px;top:1.70px;width:1.2px;height:4.5px;background:#15502b"></i><i style="left:18.40px;bottom:1.30px;width:1.2px;height:4.6px;background:#15502b"></i><i style="left:38.40px;top:1.70px;width:1.2px;height:4.5px;background:#15502b"></i><i style="left:38.40px;bottom:1.30px;width:1.2px;height:4.6px;background:#15502b"></i><i style="left:58.40px;top:1.70px;width:1.2px;height:4.5px;background:#15502b"></i><i style="left:58.40px;bottom:1.30px;width:1.2px;height:4.6px;background:#15502b"></i><i style="left:38.90px;top:6.00px;width:15.00px;height:2px;background:linear-gradient(#e4f3e8 50%,#7fc99b 50%)"></i><i style="left:53.90px;top:8.00px;width:4.00px;height:2px;background:linear-gradient(#e4f3e8 50%,#7fc99b 50%)"></i><i style="left:13.60px;top:12.00px;width:16.30px;height:2px;background:linear-gradient(#e4f3e8 50%,#7fc99b 50%)"></i><i style="left:55.90px;top:12.00px;width:4.00px;height:2px;background:linear-gradient(#e4f3e8 50%,#7fc99b 50%)"></i><i style="left:73.90px;top:12.00px;width:2.70px;height:2px;background:linear-gradient(#e4f3e8 50%,#7fc99b 50%)"></i><i style="left:1.10px;top:17.00px;width:13.80px;height:2px;background:linear-gradient(#e4f3e8 50%,#7fc99b 50%)"></i><i style="left:58.90px;top:15.00px;width:15.80px;height:2px;background:linear-gradient(#e4f3e8 50%,#7fc99b 50%)"></i><i style="left:28.90px;top:24.00px;width:6.00px;height:2px;background:linear-gradient(#e4f3e8 50%,#7fc99b 50%)"></i><i style="left:33.90px;top:33.00px;width:5.80px;height:2px;background:linear-gradient(#e4f3e8 50%,#7fc99b 50%)"></i></div><div style="left:559.90px;top:200.50px;width:80.00px;height:38.50px;background:#22a04f;border:1.1px solid #133820;box-shadow:inset 0 0 0 1.15px #3fd074;overflow:hidden"><i style="left:18.40px;top:1.70px;width:1.2px;height:4.5px;background:#15502b"></i><i style="left:18.40px;bottom:1.30px;width:1.2px;height:4.6px;background:#15502b"></i><i style="left:38.40px;top:1.70px;width:1.2px;height:4.5px;background:#15502b"></i><i style="left:38.40px;bottom:1.30px;width:1.2px;height:4.6px;background:#15502b"></i><i style="left:58.40px;top:1.70px;width:1.2px;height:4.5px;background:#15502b"></i><i style="left:58.40px;bottom:1.30px;width:1.2px;height:4.6px;background:#15502b"></i><i style="left:38.90px;top:6.00px;width:15.00px;height:2px;background:linear-gradient(#e4f3e8 50%,#7fc99b 50%)"></i><i style="left:53.90px;top:8.00px;width:4.00px;height:2px;background:linear-gradient(#e4f3e8 50%,#7fc99b 50%)"></i><i style="left:13.60px;top:12.00px;width:16.30px;height:2px;background:linear-gradient(#e4f3e8 50%,#7fc99b 50%)"></i><i style="left:55.90px;top:12.00px;width:4.00px;height:2px;background:linear-gradient(#e4f3e8 50%,#7fc99b 50%)"></i><i style="left:73.90px;top:12.00px;width:2.70px;height:2px;background:linear-gradient(#e4f3e8 50%,#7fc99b 50%)"></i><i style="left:1.10px;top:17.00px;width:13.80px;height:2px;background:linear-gradient(#e4f3e8 50%,#7fc99b 50%)"></i><i style="left:58.90px;top:15.00px;width:15.80px;height:2px;background:linear-gradient(#e4f3e8 50%,#7fc99b 50%)"></i><i style="left:28.90px;top:24.00px;width:6.00px;height:2px;background:linear-gradient(#e4f3e8 50%,#7fc99b 50%)"></i><i style="left:33.90px;top:33.00px;width:5.80px;height:2px;background:linear-gradient(#e4f3e8 50%,#7fc99b 50%)"></i></div><div style="left:479.90px;top:280.50px;width:80.00px;height:38.50px;background:#22a04f;border:1.1px solid #133820;box-shadow:inset 0 0 0 1.15px #3fd074;overflow:hidden"><i style="left:18.40px;top:1.70px;width:1.2px;height:4.5px;background:#15502b"></i><i style="left:18.40px;bottom:1.30px;width:1.2px;height:4.6px;background:#15502b"></i><i style="left:38.40px;top:1.70px;width:1.2px;height:4.5px;background:#15502b"></i><i style="left:38.40px;bottom:1.30px;width:1.2px;height:4.6px;background:#15502b"></i><i style="left:58.40px;top:1.70px;width:1.2px;height:4.5px;background:#15502b"></i><i style="left:58.40px;bottom:1.30px;width:1.2px;height:4.6px;background:#15502b"></i><i style="left:1.10px;top:16.00px;width:74.80px;height:2px;background:linear-gradient(#e4f3e8 50%,#7fc99b 50%)"></i></div></div></div>
</div>
</div>
</body></html>
